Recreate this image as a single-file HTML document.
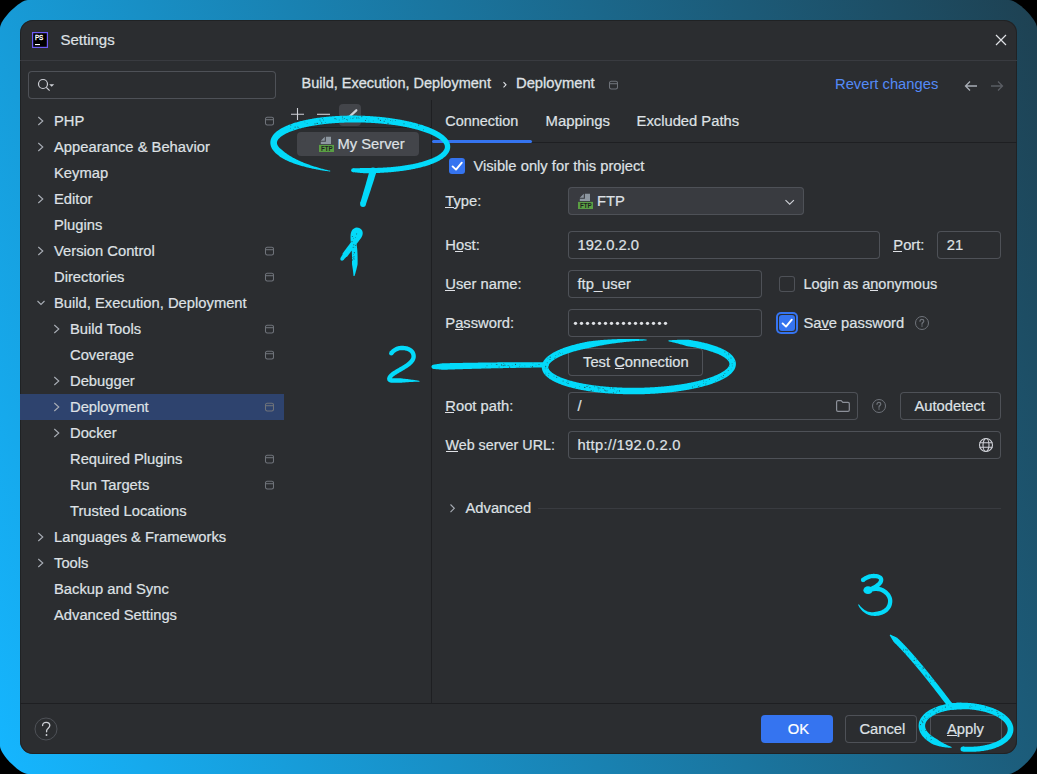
<!DOCTYPE html>
<html><head><meta charset="utf-8"><style>
html,body{margin:0;padding:0;}
body{width:1037px;height:774px;position:relative;overflow:hidden;background:#000;font-family:"Liberation Sans",sans-serif;}
.bg{position:absolute;left:0;top:0;width:1037px;height:774px;clip-path:path('M28 0H1009C1017.4 0 1037 19.6 1037 28V746C1037 754.4 1017.4 774 1009 774H28C19.6 774 0 754.4 0 746V28C0 19.6 19.6 0 28 0Z');background:linear-gradient(68deg,#15b6ff 0%,#1e4152 100%);}
.t{position:absolute;white-space:nowrap;-webkit-text-stroke:0.2px currentColor;}
.r{position:absolute;box-sizing:border-box;}
</style></head><body>
<div class="bg"></div>
<div class="r" style="left:20px;top:20px;width:997px;height:734px;background:#2b2d30;border-radius:13px;box-shadow:inset 0 0 0 1px rgba(30,31,34,0.8);"></div>
<svg class="r" style="left:32px;top:32px" width="16" height="16" viewBox="0 0 16 16"><rect x="0.6" y="0.6" width="14.8" height="14.8" fill="#000" stroke="#6e5cf6" stroke-width="1.2"/><text x="2.9" y="8.3" font-family="Liberation Sans" font-size="7.2" fill="#fff" stroke="#fff" stroke-width="0.35" textLength="8.3" lengthAdjust="spacingAndGlyphs">PS</text><rect x="3" y="12" width="5" height="1.1" fill="#fff"/></svg>
<div class="t" style="left:60.5px;top:31px;font-size:15px;line-height:18px;color:#dfe1e5;">Settings</div>
<svg class="r" style="left:994px;top:33px" width="14" height="14" viewBox="0 0 14 14"><path d="M2 2L12 12M12 2L2 12" stroke="#dfe1e5" stroke-width="1.2"/></svg>
<div class="r" style="left:20px;top:60px;width:997px;height:1px;background:#393b40;border-radius:0px;"></div>
<div class="r" style="left:28px;top:71px;width:248px;height:28px;background:none;border-radius:4px;box-shadow:inset 0 0 0 1px #4e5157;"></div>
<svg class="r" style="left:36px;top:76px" width="22" height="18" viewBox="0 0 22 18"><circle cx="7" cy="8" r="4.5" fill="none" stroke="#ced0d6" stroke-width="1.2"/><path d="M10.3 11.3L13.6 14.6" stroke="#ced0d6" stroke-width="1.2"/><path d="M13.2 8.2h5l-2.5 2.5z" fill="#ced0d6"/></svg>
<div class="r" style="left:20px;top:394px;width:264px;height:26px;background:#2e436e;border-radius:0px;"></div>
<div class="t" style="left:54px;top:112px;font-size:14.75px;line-height:18px;color:#dfe1e5;">PHP</div>
<svg class="r" style="left:36px;top:113px" width="12" height="16" viewBox="0 0 12 16"><path d="M2.3 4L6.8 8L2.3 12" fill="none" stroke="#a8adb5" stroke-width="1.1"/></svg>
<svg class="r" style="left:264px;top:116px" width="10" height="10" viewBox="0 0 10 10"><rect x="1.5" y="1.3" width="8" height="7.6" rx="1.6" fill="none" stroke="#6f737a" stroke-width="1.05"/><path d="M1.5 3.7h8" stroke="#6f737a" stroke-width="1.05"/></svg>
<div class="t" style="left:54px;top:138px;font-size:14.75px;line-height:18px;color:#dfe1e5;">Appearance &amp; Behavior</div>
<svg class="r" style="left:36px;top:139px" width="12" height="16" viewBox="0 0 12 16"><path d="M2.3 4L6.8 8L2.3 12" fill="none" stroke="#a8adb5" stroke-width="1.1"/></svg>
<div class="t" style="left:54px;top:164px;font-size:14.75px;line-height:18px;color:#dfe1e5;">Keymap</div>
<div class="t" style="left:54px;top:190px;font-size:14.75px;line-height:18px;color:#dfe1e5;">Editor</div>
<svg class="r" style="left:36px;top:191px" width="12" height="16" viewBox="0 0 12 16"><path d="M2.3 4L6.8 8L2.3 12" fill="none" stroke="#a8adb5" stroke-width="1.1"/></svg>
<div class="t" style="left:54px;top:216px;font-size:14.75px;line-height:18px;color:#dfe1e5;">Plugins</div>
<div class="t" style="left:54px;top:242px;font-size:14.75px;line-height:18px;color:#dfe1e5;">Version Control</div>
<svg class="r" style="left:36px;top:243px" width="12" height="16" viewBox="0 0 12 16"><path d="M2.3 4L6.8 8L2.3 12" fill="none" stroke="#a8adb5" stroke-width="1.1"/></svg>
<svg class="r" style="left:264px;top:246px" width="10" height="10" viewBox="0 0 10 10"><rect x="1.5" y="1.3" width="8" height="7.6" rx="1.6" fill="none" stroke="#6f737a" stroke-width="1.05"/><path d="M1.5 3.7h8" stroke="#6f737a" stroke-width="1.05"/></svg>
<div class="t" style="left:54px;top:268px;font-size:14.75px;line-height:18px;color:#dfe1e5;">Directories</div>
<svg class="r" style="left:264px;top:272px" width="10" height="10" viewBox="0 0 10 10"><rect x="1.5" y="1.3" width="8" height="7.6" rx="1.6" fill="none" stroke="#6f737a" stroke-width="1.05"/><path d="M1.5 3.7h8" stroke="#6f737a" stroke-width="1.05"/></svg>
<div class="t" style="left:54px;top:294px;font-size:14.75px;line-height:18px;color:#dfe1e5;">Build, Execution, Deployment</div>
<svg class="r" style="left:36px;top:295px" width="12" height="16" viewBox="0 0 12 16"><path d="M1.5 6L5 9.5L8.5 6" fill="none" stroke="#a8adb5" stroke-width="1.1"/></svg>
<div class="t" style="left:70px;top:320px;font-size:14.75px;line-height:18px;color:#dfe1e5;">Build Tools</div>
<svg class="r" style="left:52px;top:321px" width="12" height="16" viewBox="0 0 12 16"><path d="M2.3 4L6.8 8L2.3 12" fill="none" stroke="#a8adb5" stroke-width="1.1"/></svg>
<svg class="r" style="left:264px;top:324px" width="10" height="10" viewBox="0 0 10 10"><rect x="1.5" y="1.3" width="8" height="7.6" rx="1.6" fill="none" stroke="#6f737a" stroke-width="1.05"/><path d="M1.5 3.7h8" stroke="#6f737a" stroke-width="1.05"/></svg>
<div class="t" style="left:70px;top:346px;font-size:14.75px;line-height:18px;color:#dfe1e5;">Coverage</div>
<svg class="r" style="left:264px;top:350px" width="10" height="10" viewBox="0 0 10 10"><rect x="1.5" y="1.3" width="8" height="7.6" rx="1.6" fill="none" stroke="#6f737a" stroke-width="1.05"/><path d="M1.5 3.7h8" stroke="#6f737a" stroke-width="1.05"/></svg>
<div class="t" style="left:70px;top:372px;font-size:14.75px;line-height:18px;color:#dfe1e5;">Debugger</div>
<svg class="r" style="left:52px;top:373px" width="12" height="16" viewBox="0 0 12 16"><path d="M2.3 4L6.8 8L2.3 12" fill="none" stroke="#a8adb5" stroke-width="1.1"/></svg>
<div class="t" style="left:70px;top:398px;font-size:14.75px;line-height:18px;color:#dfe1e5;">Deployment</div>
<svg class="r" style="left:52px;top:399px" width="12" height="16" viewBox="0 0 12 16"><path d="M2.3 4L6.8 8L2.3 12" fill="none" stroke="#a8adb5" stroke-width="1.1"/></svg>
<svg class="r" style="left:264px;top:402px" width="10" height="10" viewBox="0 0 10 10"><rect x="1.5" y="1.3" width="8" height="7.6" rx="1.6" fill="none" stroke="#6f737a" stroke-width="1.05"/><path d="M1.5 3.7h8" stroke="#6f737a" stroke-width="1.05"/></svg>
<div class="t" style="left:70px;top:424px;font-size:14.75px;line-height:18px;color:#dfe1e5;">Docker</div>
<svg class="r" style="left:52px;top:425px" width="12" height="16" viewBox="0 0 12 16"><path d="M2.3 4L6.8 8L2.3 12" fill="none" stroke="#a8adb5" stroke-width="1.1"/></svg>
<div class="t" style="left:70px;top:450px;font-size:14.75px;line-height:18px;color:#dfe1e5;">Required Plugins</div>
<svg class="r" style="left:264px;top:454px" width="10" height="10" viewBox="0 0 10 10"><rect x="1.5" y="1.3" width="8" height="7.6" rx="1.6" fill="none" stroke="#6f737a" stroke-width="1.05"/><path d="M1.5 3.7h8" stroke="#6f737a" stroke-width="1.05"/></svg>
<div class="t" style="left:70px;top:476px;font-size:14.75px;line-height:18px;color:#dfe1e5;">Run Targets</div>
<svg class="r" style="left:264px;top:480px" width="10" height="10" viewBox="0 0 10 10"><rect x="1.5" y="1.3" width="8" height="7.6" rx="1.6" fill="none" stroke="#6f737a" stroke-width="1.05"/><path d="M1.5 3.7h8" stroke="#6f737a" stroke-width="1.05"/></svg>
<div class="t" style="left:70px;top:502px;font-size:14.75px;line-height:18px;color:#dfe1e5;">Trusted Locations</div>
<div class="t" style="left:54px;top:528px;font-size:14.75px;line-height:18px;color:#dfe1e5;">Languages &amp; Frameworks</div>
<svg class="r" style="left:36px;top:529px" width="12" height="16" viewBox="0 0 12 16"><path d="M2.3 4L6.8 8L2.3 12" fill="none" stroke="#a8adb5" stroke-width="1.1"/></svg>
<div class="t" style="left:54px;top:554px;font-size:14.75px;line-height:18px;color:#dfe1e5;">Tools</div>
<svg class="r" style="left:36px;top:555px" width="12" height="16" viewBox="0 0 12 16"><path d="M2.3 4L6.8 8L2.3 12" fill="none" stroke="#a8adb5" stroke-width="1.1"/></svg>
<div class="t" style="left:54px;top:580px;font-size:14.75px;line-height:18px;color:#dfe1e5;">Backup and Sync</div>
<div class="t" style="left:54px;top:606px;font-size:14.75px;line-height:18px;color:#dfe1e5;">Advanced Settings</div>
<div class="t" style="left:301.5px;top:75px;font-size:14.5px;line-height:17px;color:#dfe1e5;-webkit-text-stroke:0.3px #dfe1e5;">Build, Execution, Deployment</div>
<svg class="r" style="left:500px;top:79px" width="10" height="12" viewBox="0 0 10 12"><path d="M3.5 3.2L6 5.8L3.5 8.4" fill="none" stroke="#dfe1e5" stroke-width="1.1"/></svg>
<div class="t" style="left:516px;top:74px;font-size:14.75px;line-height:18px;color:#dfe1e5;-webkit-text-stroke:0.3px #dfe1e5;">Deployment</div>
<svg class="r" style="left:608px;top:80px" width="10" height="10" viewBox="0 0 10 10"><rect x="1.5" y="1.3" width="8" height="7.6" rx="1.6" fill="none" stroke="#6f737a" stroke-width="1.05"/><path d="M1.5 3.7h8" stroke="#6f737a" stroke-width="1.05"/></svg>
<div class="t" style="left:835px;top:75px;font-size:14.75px;line-height:18px;color:#548af7;-webkit-text-stroke:0;">Revert changes</div>
<svg class="r" style="left:963px;top:79px" width="16" height="14" viewBox="0 0 16 14"><path d="M2.5 7H14M7 2.5L2.5 7L7 11.5" fill="none" stroke="#a8adb5" stroke-width="1.3"/></svg>
<svg class="r" style="left:989px;top:79px" width="16" height="14" viewBox="0 0 16 14"><path d="M2 7H13.5M9 2.5L13.5 7L9 11.5" fill="none" stroke="#5a5d63" stroke-width="1.3"/></svg>
<svg class="r" style="left:289px;top:106px" width="16" height="16" viewBox="0 0 16 16"><path d="M8.5 2V14M2 8.3H15" stroke="#ced0d6" stroke-width="1.1"/></svg>
<svg class="r" style="left:315px;top:106px" width="16" height="16" viewBox="0 0 16 16"><path d="M2 8.3H15" stroke="#ced0d6" stroke-width="1.1"/></svg>
<div class="r" style="left:339px;top:104px;width:22px;height:22px;background:#43454a;border-radius:4px;"></div>
<svg class="r" style="left:342px;top:107px" width="16" height="16" viewBox="0 0 16 16"><path d="M5.5 11.5L14.3 3.3" stroke="#ced0d6" stroke-width="2.3" stroke-linecap="round"/></svg>
<div class="r" style="left:284px;top:127px;width:147px;height:1px;background:#1e1f22;border-radius:0px;"></div>
<div class="r" style="left:297px;top:132px;width:122px;height:24px;background:#43454a;border-radius:4px;"></div>
<svg class="r" style="left:319px;top:136px" width="16" height="17" viewBox="0 0 16 17"><path d="M1.8 4.8L5.8 0.8V4.8z M6.9 0.8H12V8H1.8V5.7H6.9z" fill="#8d97a0"/><rect x="0" y="8.9" width="15" height="7.1" fill="#5a9e44"/><text x="2" y="14.8" font-family="Liberation Sans" font-weight="bold" font-size="6.7" textLength="11.7" lengthAdjust="spacingAndGlyphs" fill="#1e1f22">FTP</text></svg>
<div class="t" style="left:337.5px;top:135px;font-size:14.75px;line-height:18px;color:#dfe1e5;">My Server</div>
<div class="r" style="left:431px;top:100px;width:1px;height:603px;background:#1e1f22;border-radius:0px;"></div>
<div class="t" style="left:445.3px;top:113px;font-size:14.45px;line-height:17px;color:#dfe1e5;">Connection</div>
<div class="t" style="left:545.5px;top:112px;font-size:14.9px;line-height:18px;color:#dfe1e5;">Mappings</div>
<div class="t" style="left:636.6px;top:112px;font-size:14.75px;line-height:18px;color:#dfe1e5;">Excluded Paths</div>
<div class="r" style="left:432px;top:142px;width:585px;height:1px;background:#1e1f22;border-radius:0px;"></div>
<div class="r" style="left:432px;top:140px;width:100px;height:3px;background:#3574f0;border-radius:1.5px;"></div>
<div class="r" style="left:449px;top:158px;width:16px;height:16px;background:#3574f0;border-radius:3px;"></div>
<svg class="r" style="left:449px;top:158px" width="16" height="16" viewBox="0 0 16 16"><path d="M3.6 8.4L7 11.6L12.8 4.7" fill="none" stroke="#fff" stroke-width="1.9" stroke-linecap="round" stroke-linejoin="round"/></svg>
<div class="t" style="left:473.4px;top:157px;font-size:14.75px;line-height:18px;color:#dfe1e5;">Visible only for this project</div>
<div class="t" style="left:445.3px;top:192px;font-size:14.75px;line-height:18px;color:#dfe1e5;">Type:</div>
<div class="r" style="left:445.3px;top:207px;width:9px;height:1px;background:#dfe1e5;border-radius:0px;"></div>
<div class="r" style="left:568px;top:187px;width:236px;height:28px;background:#393b40;border-radius:4px;box-shadow:inset 0 0 0 1px #4e5157;"></div>
<svg class="r" style="left:578px;top:193px" width="16" height="17" viewBox="0 0 16 17"><path d="M1.8 4.8L5.8 0.8V4.8z M6.9 0.8H12V8H1.8V5.7H6.9z" fill="#8d97a0"/><rect x="0" y="8.9" width="15" height="7.1" fill="#5a9e44"/><text x="2" y="14.8" font-family="Liberation Sans" font-weight="bold" font-size="6.7" textLength="11.7" lengthAdjust="spacingAndGlyphs" fill="#1e1f22">FTP</text></svg>
<div class="t" style="left:597px;top:192px;font-size:14.75px;line-height:18px;color:#dfe1e5;">FTP</div>
<svg class="r" style="left:783px;top:196px" width="12" height="12" viewBox="0 0 12 12"><path d="M2.5 4.2L6.7 8.2L10.9 4.2" fill="none" stroke="#ced0d6" stroke-width="1.15"/></svg>
<div class="t" style="left:445.3px;top:236px;font-size:14.75px;line-height:18px;color:#dfe1e5;">Host:</div>
<div class="r" style="left:455px;top:251px;width:8px;height:1px;background:#dfe1e5;border-radius:0px;"></div>
<div class="r" style="left:568px;top:231px;width:312px;height:28px;background:none;border-radius:4px;box-shadow:inset 0 0 0 1px #4e5157;"></div>
<div class="t" style="left:577.5px;top:236px;font-size:14.75px;line-height:18px;color:#dfe1e5;">192.0.2.0</div>
<div class="t" style="left:893.3px;top:236px;font-size:14.75px;line-height:18px;color:#dfe1e5;">Port:</div>
<div class="r" style="left:893.3px;top:251px;width:9px;height:1px;background:#dfe1e5;border-radius:0px;"></div>
<div class="r" style="left:937px;top:231px;width:64px;height:28px;background:none;border-radius:4px;box-shadow:inset 0 0 0 1px #4e5157;"></div>
<div class="t" style="left:946.8px;top:236px;font-size:14.75px;line-height:18px;color:#dfe1e5;">21</div>
<div class="t" style="left:445.3px;top:275px;font-size:14.75px;line-height:18px;color:#dfe1e5;">User name:</div>
<div class="r" style="left:445.3px;top:290px;width:10px;height:1px;background:#dfe1e5;border-radius:0px;"></div>
<div class="r" style="left:568px;top:270px;width:194px;height:28px;background:none;border-radius:4px;box-shadow:inset 0 0 0 1px #4e5157;"></div>
<div class="t" style="left:577.5px;top:275px;font-size:14.75px;line-height:18px;color:#dfe1e5;">ftp_user</div>
<div class="r" style="left:779px;top:276px;width:16px;height:16px;background:none;border-radius:3px;box-shadow:inset 0 0 0 1px #4e5157;"></div>
<div class="t" style="left:803.4px;top:276px;font-size:14.5px;line-height:17px;color:#dfe1e5;">Login as anonymous</div>
<div class="r" style="left:869.5px;top:290px;width:8.5px;height:1px;background:#dfe1e5;border-radius:0px;"></div>
<div class="t" style="left:445.3px;top:314px;font-size:14.75px;line-height:18px;color:#dfe1e5;">Password:</div>
<div class="r" style="left:455px;top:329px;width:8px;height:1px;background:#dfe1e5;border-radius:0px;"></div>
<div class="r" style="left:568px;top:309px;width:194px;height:28px;background:none;border-radius:4px;box-shadow:inset 0 0 0 1px #4e5157;"></div>
<svg class="r" style="left:570px;top:318px" width="100" height="10" viewBox="0 0 100 10"><circle cx="5.5" cy="5.3" r="1.65" fill="#dfe1e5"/><circle cx="11.5" cy="5.3" r="1.65" fill="#dfe1e5"/><circle cx="17.5" cy="5.3" r="1.65" fill="#dfe1e5"/><circle cx="23.5" cy="5.3" r="1.65" fill="#dfe1e5"/><circle cx="29.5" cy="5.3" r="1.65" fill="#dfe1e5"/><circle cx="35.5" cy="5.3" r="1.65" fill="#dfe1e5"/><circle cx="41.5" cy="5.3" r="1.65" fill="#dfe1e5"/><circle cx="47.5" cy="5.3" r="1.65" fill="#dfe1e5"/><circle cx="53.5" cy="5.3" r="1.65" fill="#dfe1e5"/><circle cx="59.5" cy="5.3" r="1.65" fill="#dfe1e5"/><circle cx="65.5" cy="5.3" r="1.65" fill="#dfe1e5"/><circle cx="71.5" cy="5.3" r="1.65" fill="#dfe1e5"/><circle cx="77.5" cy="5.3" r="1.65" fill="#dfe1e5"/><circle cx="83.5" cy="5.3" r="1.65" fill="#dfe1e5"/><circle cx="89.5" cy="5.3" r="1.65" fill="#dfe1e5"/><circle cx="95.5" cy="5.3" r="1.65" fill="#dfe1e5"/></svg>
<div class="r" style="left:776px;top:312px;width:22px;height:22px;background:none;border-radius:5px;box-shadow:inset 0 0 0 1px #3574f0;box-shadow:inset 0 0 0 2px #3574f0;"></div>
<div class="r" style="left:779px;top:315px;width:16px;height:16px;background:#3574f0;border-radius:3px;"></div>
<svg class="r" style="left:779px;top:315px" width="16" height="16" viewBox="0 0 16 16"><path d="M3.6 8.4L7 11.6L12.8 4.7" fill="none" stroke="#fff" stroke-width="1.9" stroke-linecap="round" stroke-linejoin="round"/></svg>
<div class="t" style="left:803.4px;top:314px;font-size:14.75px;line-height:18px;color:#dfe1e5;">Save password</div>
<div class="r" style="left:820px;top:329px;width:8.5px;height:1px;background:#dfe1e5;border-radius:0px;"></div>
<svg class="r" style="left:914px;top:315px" width="16" height="16" viewBox="0 0 16 16"><circle cx="8" cy="8" r="6.5" fill="none" stroke="#6f737a" stroke-width="1"/><path d="M6 6.3C6 5 6.9 4.4 7.9 4.4C9 4.4 9.8 5.1 9.8 6.1C9.8 7.3 8.2 7.6 8 8.8V9.3" fill="none" stroke="#6f737a" stroke-width="1.2" stroke-linecap="round"/><circle cx="8" cy="10.9" r="0.75" fill="#6f737a"/></svg>
<div class="r" style="left:568px;top:348px;width:135px;height:28px;background:none;border-radius:4px;box-shadow:inset 0 0 0 1px #4e5157;"></div>
<div class="t" style="left:583px;top:353px;font-size:14.75px;line-height:18px;color:#dfe1e5;">Test Connection</div>
<div class="r" style="left:615px;top:368px;width:9px;height:1px;background:#dfe1e5;border-radius:0px;"></div>
<div class="t" style="left:445.3px;top:397px;font-size:14.75px;line-height:18px;color:#dfe1e5;">Root path:</div>
<div class="r" style="left:445.3px;top:412px;width:9px;height:1px;background:#dfe1e5;border-radius:0px;"></div>
<div class="r" style="left:568px;top:392px;width:290px;height:28px;background:none;border-radius:4px;box-shadow:inset 0 0 0 1px #4e5157;"></div>
<div class="t" style="left:577.6px;top:397px;font-size:14.75px;line-height:18px;color:#dfe1e5;">/</div>
<svg class="r" style="left:835px;top:398px" width="16" height="16" viewBox="0 0 16 16"><path d="M1.6 4Q1.6 2.6 3 2.6H6.2L7.8 4.3H13Q14.3 4.3 14.3 5.6V12Q14.3 13.4 13 13.4H3Q1.6 13.4 1.6 12Z" fill="none" stroke="#8c9099" stroke-width="1.2" stroke-linejoin="round"/></svg>
<svg class="r" style="left:871px;top:398px" width="16" height="16" viewBox="0 0 16 16"><circle cx="8" cy="8" r="6.5" fill="none" stroke="#6f737a" stroke-width="1"/><path d="M6 6.3C6 5 6.9 4.4 7.9 4.4C9 4.4 9.8 5.1 9.8 6.1C9.8 7.3 8.2 7.6 8 8.8V9.3" fill="none" stroke="#6f737a" stroke-width="1.2" stroke-linecap="round"/><circle cx="8" cy="10.9" r="0.75" fill="#6f737a"/></svg>
<div class="r" style="left:900px;top:392px;width:101px;height:28px;background:none;border-radius:4px;box-shadow:inset 0 0 0 1px #4e5157;"></div>
<div class="t" style="left:914.4px;top:397px;font-size:14.75px;line-height:18px;color:#dfe1e5;">Autodetect</div>
<div class="t" style="left:445.5px;top:437px;font-size:14.3px;line-height:17px;color:#dfe1e5;">Web server URL:</div>
<div class="r" style="left:445.5px;top:451px;width:12px;height:1px;background:#dfe1e5;border-radius:0px;"></div>
<div class="r" style="left:568px;top:431px;width:433px;height:28px;background:none;border-radius:4px;box-shadow:inset 0 0 0 1px #4e5157;"></div>
<div class="t" style="left:577.6px;top:436px;font-size:14.75px;line-height:18px;color:#dfe1e5;letter-spacing:0.3px;">http://192.0.2.0</div>
<svg class="r" style="left:978px;top:437px" width="16" height="16" viewBox="0 0 16 16"><circle cx="8" cy="8" r="6.5" fill="none" stroke="#ced0d6" stroke-width="1.1"/><ellipse cx="8" cy="8" rx="3" ry="6.5" fill="none" stroke="#ced0d6" stroke-width="1.1"/><path d="M1.5 5.8H14.5M1.5 10.2H14.5" stroke="#ced0d6" stroke-width="1.1"/></svg>
<svg class="r" style="left:446px;top:500px" width="12" height="16" viewBox="0 0 12 16"><path d="M4.5 4.5L8.3 8.3L4.5 12.1" fill="none" stroke="#a8adb5" stroke-width="1.1"/></svg>
<div class="t" style="left:465.5px;top:499px;font-size:14.75px;line-height:18px;color:#dfe1e5;">Advanced</div>
<div class="r" style="left:538px;top:508px;width:463px;height:1px;background:#393b40;border-radius:0px;"></div>
<div class="r" style="left:20px;top:703px;width:997px;height:1px;background:#1e1f22;border-radius:0px;"></div>
<svg class="r" style="left:34px;top:717px" width="24" height="24" viewBox="0 0 24 24"><circle cx="12" cy="12" r="11" fill="none" stroke="#4e5157" stroke-width="1"/><path d="M8.6 8.6C8.6 6.4 10.1 5.3 12.2 5.3C14.3 5.3 15.8 6.6 15.8 8.5C15.8 10.9 12.9 11.3 12.6 13.6V14.8" fill="none" stroke="#ced0d6" stroke-width="1.3" stroke-linecap="round"/><circle cx="12.5" cy="18" r="0.95" fill="#ced0d6"/></svg>
<div class="r" style="left:761px;top:715px;width:72px;height:28px;background:#3574f0;border-radius:4px;"></div>
<div class="t" style="left:787.8px;top:720px;font-size:14.75px;line-height:18px;color:#ffffff;">OK</div>
<div class="r" style="left:845px;top:715px;width:72px;height:28px;background:none;border-radius:4px;box-shadow:inset 0 0 0 1px #4e5157;"></div>
<div class="t" style="left:859.4px;top:720px;font-size:14.75px;line-height:18px;color:#dfe1e5;">Cancel</div>
<div class="r" style="left:930px;top:715px;width:72px;height:28px;background:none;border-radius:4px;box-shadow:inset 0 0 0 1px #4e5157;"></div>
<div class="t" style="left:947px;top:720px;font-size:14.75px;line-height:18px;color:#dfe1e5;">Apply</div>
<div class="r" style="left:947px;top:735px;width:10px;height:1px;background:#dfe1e5;border-radius:0px;"></div>
<svg class="r" style="left:0;top:0" width="1037" height="774" viewBox="0 0 1037 774"><g fill="#03dafa"><path d="M330.29 170.77 L329.51 170.59 L328.73 170.40 L327.95 170.22 L327.18 170.04 L326.40 169.84 L325.62 169.65 L324.85 169.46 L324.08 169.26 L323.30 169.05 L322.53 168.85 L321.76 168.64 L320.99 168.43 L320.22 168.22 L319.45 168.00 L318.69 167.78 L317.92 167.55 L317.15 167.33 L316.39 167.10 L315.63 166.86 L314.86 166.63 L314.11 166.39 L313.35 166.14 L312.59 165.89 L311.84 165.65 L311.09 165.39 L310.33 165.13 L309.58 164.87 L308.84 164.60 L308.08 164.33 L307.34 164.06 L306.60 163.78 L305.85 163.50 L305.12 163.22 L304.38 162.92 L303.64 162.63 L302.91 162.33 L302.19 162.03 L301.45 161.71 L300.73 161.41 L300.02 161.09 L299.29 160.76 L298.58 160.44 L297.87 160.10 L297.15 159.76 L296.45 159.42 L295.75 159.07 L295.05 158.72 L294.37 158.36 L293.67 157.99 L292.99 157.63 L292.32 157.24 L291.63 156.86 L290.97 156.47 L290.30 156.07 L289.65 155.67 L289.01 155.25 L288.36 154.84 L287.74 154.41 L287.11 153.98 L286.50 153.54 L285.89 153.09 L285.29 152.63 L284.70 152.18 L284.11 151.74 L283.52 151.30 L282.95 150.84 L282.37 150.36 L281.77 149.85 L281.18 149.35 L280.62 148.86 L280.10 148.39 L279.63 147.92 L279.16 147.42 L278.74 146.94 L278.37 146.45 L278.02 145.94 L277.71 145.42 L277.46 144.93 L277.26 144.46 L277.11 143.98 L277.01 143.50 L276.96 143.03 L276.96 142.58 L277.00 142.12 L277.09 141.66 L277.23 141.20 L277.41 140.75 L277.66 140.29 L277.96 139.80 L278.31 139.31 L278.68 138.84 L279.09 138.39 L279.56 137.92 L280.04 137.47 L280.55 137.05 L281.10 136.61 L281.65 136.19 L282.23 135.80 L282.82 135.40 L283.43 135.02 L284.06 134.65 L284.70 134.29 L285.35 133.94 L286.00 133.60 L286.67 133.27 L287.35 132.95 L288.03 132.64 L288.72 132.33 L289.41 132.03 L290.12 131.75 L290.82 131.47 L291.53 131.20 L292.26 130.93 L292.97 130.67 L293.71 130.42 L294.43 130.17 L295.15 129.94 L295.90 129.70 L296.63 129.47 L297.38 129.25 L298.12 129.03 L298.85 128.82 L299.62 128.61 L300.36 128.41 L301.10 128.22 L301.87 128.02 L302.62 127.83 L303.38 127.65 L304.14 127.47 L304.90 127.30 L305.66 127.13 L306.43 126.96 L307.19 126.80 L307.96 126.64 L308.73 126.49 L309.49 126.34 L310.26 126.19 L311.04 126.04 L311.80 125.91 L312.58 125.77 L313.36 125.64 L314.13 125.50 L314.90 125.38 L315.69 125.26 L316.46 125.13 L317.23 125.02 L318.02 124.91 L318.79 124.79 L319.57 124.69 L320.35 124.58 L321.14 124.48 L321.91 124.38 L322.69 124.29 L323.49 124.19 L324.26 124.10 L325.04 124.01 L325.83 123.93 L326.62 123.84 L327.39 123.76 L328.18 123.69 L328.98 123.61 L329.75 123.53 L330.53 123.47 L331.33 123.40 L332.12 123.33 L332.90 123.27 L333.69 123.21 L334.48 123.15 L335.27 123.09 L336.05 123.04 L336.84 122.99 L337.64 122.94 L338.42 122.89 L339.20 122.85 L340.00 122.81 L340.79 122.77 L341.57 122.73 L342.37 122.70 L343.17 122.66 L343.95 122.63 L344.73 122.60 L345.53 122.58 L346.33 122.55 L347.11 122.53 L347.90 122.51 L348.70 122.49 L349.49 122.48 L350.27 122.46 L351.06 122.45 L351.86 122.44 L352.65 122.44 L353.44 122.43 L354.23 122.43 L355.03 122.43 L355.82 122.43 L356.60 122.43 L357.40 122.44 L358.20 122.45 L358.98 122.45 L359.77 122.47 L360.57 122.48 L361.36 122.50 L362.15 122.51 L362.94 122.53 L363.74 122.56 L364.53 122.58 L365.31 122.61 L366.11 122.64 L366.91 122.67 L367.69 122.70 L368.47 122.73 L369.27 122.77 L370.07 122.81 L370.85 122.85 L371.64 122.89 L372.44 122.94 L373.23 122.98 L374.01 123.03 L374.80 123.09 L375.60 123.14 L376.38 123.19 L377.17 123.25 L377.96 123.32 L378.76 123.38 L379.54 123.44 L380.32 123.51 L381.12 123.58 L381.91 123.65 L382.69 123.72 L383.48 123.80 L384.27 123.88 L385.06 123.96 L385.83 124.04 L386.63 124.13 L387.42 124.22 L388.20 124.31 L388.98 124.40 L389.77 124.50 L390.56 124.59 L391.33 124.69 L392.12 124.80 L392.91 124.90 L393.69 125.01 L394.47 125.12 L395.26 125.23 L396.04 125.35 L396.81 125.46 L397.60 125.59 L398.38 125.71 L399.15 125.83 L399.93 125.97 L400.72 126.10 L401.49 126.23 L402.26 126.37 L403.05 126.51 L403.82 126.65 L404.59 126.80 L405.37 126.95 L406.15 127.11 L406.91 127.26 L407.68 127.42 L408.46 127.59 L409.23 127.75 L409.99 127.92 L410.77 128.10 L411.53 128.27 L412.29 128.45 L413.06 128.64 L413.82 128.82 L414.58 129.01 L415.35 129.21 L416.10 129.41 L416.85 129.61 L417.62 129.82 L418.37 130.03 L419.12 130.25 L419.88 130.47 L420.62 130.69 L421.36 130.92 L422.12 131.16 L422.86 131.40 L423.60 131.65 L424.34 131.89 L425.07 132.15 L425.81 132.42 L426.53 132.68 L427.25 132.95 L427.98 133.23 L428.70 133.52 L429.42 133.81 L430.13 134.10 L430.83 134.41 L431.54 134.73 L432.23 135.05 L432.93 135.38 L433.61 135.71 L434.29 136.06 L434.96 136.41 L435.62 136.78 L436.28 137.14 L436.92 137.53 L437.56 137.92 L438.18 138.32 L438.80 138.74 L439.39 139.16 L439.98 139.60 L440.54 140.04 L441.08 140.51 L441.61 140.98 L442.09 141.46 L442.57 141.96 L443.01 142.47 L443.40 142.98 L443.76 143.50 L444.08 144.04 L444.35 144.58 L444.57 145.11 L444.73 145.62 L444.83 146.15 L444.89 146.67 L444.88 147.20 L444.83 147.72 L444.71 148.25 L444.54 148.78 L444.33 149.31 L444.06 149.82 L443.73 150.34 L443.35 150.86 L442.94 151.38 L442.50 151.86 L442.02 152.35 L441.50 152.83 L440.97 153.28 L440.40 153.73 L439.83 154.16 L439.24 154.57 L438.62 154.99 L437.99 155.38 L437.35 155.76 L436.70 156.13 L436.04 156.49 L435.37 156.85 L434.69 157.18 L434.00 157.52 L433.31 157.84 L432.61 158.15 L431.91 158.45 L431.19 158.75 L430.48 159.04 L429.77 159.31 L429.03 159.59 L428.31 159.85 L427.57 160.11 L426.84 160.37 L426.11 160.61 L425.36 160.85 L424.62 161.08 L423.86 161.31 L423.12 161.54 L422.37 161.75 L421.61 161.96 L420.86 162.17 L420.10 162.37 L419.33 162.57 L418.58 162.76 L417.82 162.94 L417.05 163.13 L416.29 163.30 L415.52 163.47 L414.74 163.65 L413.98 163.81 L413.21 163.97 L412.43 164.13 L411.66 164.28 L410.89 164.43 L410.11 164.57 L409.34 164.71 L408.56 164.85 L407.77 164.99 L407.00 165.12 L406.22 165.24 L405.43 165.37 L404.66 165.49 L403.88 165.60 L403.09 165.72 L402.31 165.83 L401.53 165.94 L400.74 166.04 L399.95 166.14 L399.17 166.24 L398.39 166.33 L397.59 166.43 L396.81 166.52 L396.03 166.60 L395.24 166.69 L394.45 166.77 L393.66 166.85 L392.87 166.92 L392.08 166.99 L391.29 167.07 L390.51 167.13 L389.71 167.19 L388.92 167.26 L388.13 167.32 L387.34 167.37 L386.54 167.43 L385.76 167.48 L384.97 167.53 L384.17 167.57 L383.38 167.62 L382.59 167.66 L381.80 167.70 L381.00 167.73 L380.21 167.77 L379.42 167.80 L378.63 167.83 L377.83 167.86 L377.04 167.88 L376.25 167.90 L375.45 167.92 L374.66 167.94 L373.87 167.96 L373.08 167.97 L372.28 167.98 L371.48 167.99 L370.70 167.99 L369.90 168.00 L369.10 168.00 L368.31 168.00 L367.52 168.00 L366.72 167.99 L365.92 167.98 L365.14 167.98 L364.35 167.96 L363.55 167.97 L362.75 168.01 L361.96 168.05 L361.17 168.08 L360.37 168.11 L359.57 168.15 L358.78 168.17 L357.98 168.20 L357.18 168.22 L356.39 168.25 L355.60 168.26 L354.80 168.28 L353.99 168.29 L353.19 168.31 L353.02 172.16 L353.82 172.24 L354.62 172.33 L355.42 172.42 L356.23 172.50 L357.03 172.58 L357.83 172.66 L358.64 172.74 L359.45 172.81 L360.25 172.88 L361.05 172.95 L361.86 173.02 L362.67 173.09 L363.48 173.15 L364.28 173.18 L365.09 173.19 L365.91 173.19 L366.71 173.18 L367.51 173.18 L368.33 173.18 L369.14 173.17 L369.94 173.16 L370.74 173.15 L371.56 173.14 L372.37 173.12 L373.17 173.10 L373.98 173.09 L374.79 173.06 L375.60 173.04 L376.40 173.01 L377.21 172.99 L378.02 172.95 L378.82 172.92 L379.63 172.88 L380.44 172.85 L381.25 172.80 L382.05 172.76 L382.86 172.72 L383.68 172.67 L384.48 172.62 L385.28 172.57 L386.09 172.52 L386.90 172.46 L387.70 172.40 L388.51 172.34 L389.32 172.27 L390.13 172.21 L390.92 172.14 L391.74 172.07 L392.55 171.99 L393.34 171.92 L394.15 171.84 L394.96 171.76 L395.76 171.67 L396.56 171.58 L397.37 171.50 L398.18 171.40 L398.98 171.30 L399.78 171.21 L400.59 171.10 L401.39 171.00 L402.19 170.89 L403.00 170.78 L403.81 170.67 L404.60 170.55 L405.41 170.43 L406.22 170.31 L407.01 170.18 L407.81 170.05 L408.62 169.92 L409.41 169.78 L410.21 169.64 L411.02 169.49 L411.81 169.35 L412.61 169.20 L413.41 169.04 L414.21 168.88 L415.00 168.72 L415.81 168.55 L416.60 168.37 L417.39 168.20 L418.19 168.02 L418.98 167.83 L419.78 167.64 L420.57 167.45 L421.36 167.25 L422.15 167.04 L422.95 166.83 L423.73 166.61 L424.52 166.39 L425.31 166.16 L426.09 165.93 L426.88 165.68 L427.66 165.44 L428.45 165.19 L429.23 164.92 L430.01 164.65 L430.79 164.37 L431.56 164.09 L432.34 163.80 L433.11 163.49 L433.88 163.18 L434.65 162.85 L435.42 162.52 L436.18 162.17 L436.94 161.81 L437.70 161.44 L438.45 161.06 L439.20 160.66 L439.94 160.24 L440.68 159.81 L441.42 159.36 L442.14 158.89 L442.86 158.39 L443.57 157.87 L444.27 157.33 L444.96 156.75 L445.62 156.15 L446.28 155.51 L446.92 154.81 L447.52 154.08 L448.08 153.32 L448.62 152.49 L449.11 151.59 L449.51 150.64 L449.84 149.65 L450.07 148.61 L450.20 147.55 L450.23 146.48 L450.14 145.41 L449.94 144.36 L449.65 143.34 L449.26 142.38 L448.83 141.48 L448.35 140.64 L447.81 139.83 L447.23 139.06 L446.64 138.36 L446.02 137.68 L445.38 137.03 L444.72 136.43 L444.06 135.84 L443.37 135.28 L442.68 134.74 L441.98 134.23 L441.27 133.74 L440.56 133.26 L439.84 132.80 L439.11 132.35 L438.38 131.92 L437.64 131.50 L436.90 131.10 L436.16 130.71 L435.41 130.33 L434.67 129.96 L433.91 129.59 L433.16 129.25 L432.40 128.90 L431.63 128.57 L430.88 128.24 L430.11 127.92 L429.35 127.62 L428.58 127.31 L427.80 127.02 L427.04 126.73 L426.26 126.44 L425.49 126.17 L424.71 125.89 L423.93 125.63 L423.16 125.37 L422.38 125.11 L421.59 124.87 L420.82 124.63 L420.03 124.38 L419.24 124.15 L418.47 123.92 L417.67 123.69 L416.88 123.47 L416.11 123.26 L415.31 123.04 L414.52 122.83 L413.74 122.63 L412.94 122.43 L412.14 122.23 L411.37 122.04 L410.57 121.85 L409.77 121.67 L408.98 121.49 L408.19 121.31 L407.38 121.13 L406.60 120.96 L405.80 120.79 L405.00 120.63 L404.20 120.47 L403.42 120.31 L402.61 120.15 L401.81 120.00 L401.02 119.85 L400.22 119.70 L399.41 119.56 L398.61 119.42 L397.82 119.29 L397.01 119.15 L396.21 119.02 L395.42 118.89 L394.61 118.76 L393.80 118.64 L393.01 118.52 L392.21 118.40 L391.40 118.29 L390.59 118.17 L389.80 118.07 L388.99 117.96 L388.18 117.85 L387.38 117.75 L386.58 117.65 L385.77 117.55 L384.96 117.46 L384.16 117.37 L383.36 117.27 L382.55 117.19 L381.74 117.10 L380.94 117.02 L380.13 116.94 L379.32 116.86 L378.52 116.79 L377.72 116.71 L376.90 116.64 L376.09 116.57 L375.29 116.51 L374.48 116.44 L373.67 116.38 L372.86 116.32 L372.06 116.27 L371.25 116.21 L370.43 116.16 L369.63 116.11 L368.83 116.06 L368.01 116.01 L367.20 115.97 L366.40 115.93 L365.59 115.89 L364.77 115.86 L363.96 115.83 L363.16 115.79 L362.35 115.76 L361.53 115.74 L360.73 115.71 L359.92 115.69 L359.11 115.67 L358.29 115.65 L357.49 115.64 L356.69 115.62 L355.87 115.61 L355.05 115.60 L354.25 115.60 L353.44 115.59 L352.63 115.59 L351.81 115.59 L351.01 115.59 L350.20 115.59 L349.38 115.60 L348.57 115.61 L347.77 115.62 L346.96 115.64 L346.14 115.66 L345.33 115.68 L344.53 115.70 L343.71 115.72 L342.89 115.75 L342.09 115.78 L341.29 115.80 L340.47 115.84 L339.66 115.88 L338.86 115.91 L338.04 115.95 L337.22 116.00 L336.42 116.05 L335.62 116.09 L334.80 116.14 L333.98 116.20 L333.18 116.26 L332.37 116.31 L331.55 116.38 L330.75 116.44 L329.95 116.51 L329.13 116.57 L328.31 116.65 L327.52 116.73 L326.71 116.80 L325.89 116.89 L325.08 116.97 L324.29 117.06 L323.47 117.14 L322.65 117.24 L321.86 117.34 L321.05 117.43 L320.23 117.54 L319.43 117.64 L318.63 117.75 L317.81 117.86 L317.01 117.98 L316.21 118.10 L315.40 118.22 L314.58 118.35 L313.79 118.47 L312.98 118.60 L312.17 118.74 L311.38 118.88 L310.57 119.02 L309.76 119.18 L308.96 119.33 L308.16 119.48 L307.35 119.64 L306.55 119.81 L305.75 119.97 L304.94 120.15 L304.15 120.33 L303.35 120.51 L302.54 120.70 L301.75 120.89 L300.95 121.08 L300.15 121.29 L299.36 121.49 L298.56 121.70 L297.76 121.93 L296.98 122.15 L296.17 122.38 L295.38 122.62 L294.59 122.86 L293.80 123.11 L293.02 123.37 L292.22 123.63 L291.43 123.91 L290.65 124.19 L289.86 124.48 L289.09 124.77 L288.30 125.08 L287.52 125.40 L286.74 125.72 L285.97 126.06 L285.20 126.41 L284.42 126.77 L283.66 127.14 L282.89 127.53 L282.13 127.93 L281.38 128.35 L280.62 128.79 L279.88 129.24 L279.13 129.72 L278.40 130.21 L277.66 130.73 L276.94 131.29 L276.24 131.85 L275.53 132.47 L274.85 133.12 L274.20 133.79 L273.54 134.53 L272.92 135.33 L272.35 136.15 L271.83 137.04 L271.34 138.00 L270.93 139.03 L270.63 140.11 L270.42 141.23 L270.33 142.36 L270.36 143.50 L270.50 144.62 L270.75 145.71 L271.09 146.75 L271.52 147.75 L272.01 148.68 L272.54 149.53 L273.10 150.32 L273.72 151.11 L274.36 151.83 L274.99 152.48 L275.67 153.14 L276.35 153.73 L276.99 154.29 L277.64 154.82 L278.27 155.33 L278.93 155.86 L279.62 156.39 L280.31 156.91 L281.02 157.41 L281.74 157.86 L282.49 158.30 L283.22 158.71 L283.97 159.12 L284.72 159.50 L285.47 159.89 L286.23 160.25 L286.98 160.62 L287.75 160.96 L288.50 161.30 L289.27 161.63 L290.03 161.95 L290.80 162.26 L291.57 162.57 L292.33 162.86 L293.11 163.16 L293.88 163.43 L294.65 163.71 L295.43 163.98 L296.20 164.24 L296.98 164.50 L297.77 164.75 L298.54 165.00 L299.32 165.24 L300.11 165.48 L300.88 165.70 L301.67 165.93 L302.45 166.15 L303.23 166.36 L304.02 166.58 L304.81 166.78 L305.59 166.99 L306.38 167.19 L307.17 167.38 L307.95 167.57 L308.74 167.76 L309.53 167.94 L310.31 168.11 L311.10 168.29 L311.90 168.46 L312.68 168.63 L313.47 168.80 L314.27 168.96 L315.06 169.11 L315.85 169.27 L316.64 169.42 L317.44 169.57 L318.23 169.71 L319.02 169.86 L319.82 170.00 L320.61 170.13 L321.40 170.27 L322.20 170.40 L322.99 170.52 L323.79 170.65 L324.58 170.77 L325.38 170.89 L326.17 171.01 L326.97 171.12 L327.76 171.23 L328.56 171.34 L329.36 171.45 L330.15 171.56Z"/><circle cx="353.11" cy="170.23" r="1.93"/><path d="M369.62 170.07 L369.43 170.85 L369.23 171.61 L369.03 172.38 L368.83 173.15 L368.62 173.92 L368.42 174.68 L368.21 175.45 L368.00 176.22 L367.79 176.99 L367.57 177.75 L367.36 178.52 L367.15 179.29 L366.93 180.06 L366.71 180.82 L366.49 181.59 L366.27 182.36 L366.05 183.13 L365.83 183.89 L365.61 184.66 L365.39 185.43 L365.16 186.20 L364.94 186.97 L364.71 187.73 L364.49 188.50 L364.26 189.27 L364.04 190.04 L363.81 190.81 L363.59 191.58 L363.36 192.35 L363.13 193.12 L362.91 193.89 L362.68 194.66 L362.45 195.43 L362.23 196.20 L362.00 196.97 L361.78 197.74 L361.55 198.52 L361.33 199.29 L361.11 200.06 L360.88 200.84 L360.66 201.61 L360.44 202.39 L360.22 203.16 L365.78 204.84 L366.02 204.07 L366.27 203.32 L366.51 202.56 L366.76 201.80 L367.01 201.04 L367.25 200.28 L367.50 199.52 L367.75 198.76 L368.01 198.00 L368.26 197.24 L368.51 196.48 L368.76 195.72 L369.01 194.96 L369.27 194.20 L369.52 193.44 L369.77 192.68 L370.03 191.91 L370.28 191.15 L370.53 190.39 L370.78 189.63 L371.04 188.86 L371.29 188.10 L371.54 187.34 L371.79 186.57 L372.04 185.81 L372.29 185.04 L372.54 184.28 L372.79 183.51 L373.04 182.74 L373.28 181.97 L373.53 181.21 L373.77 180.44 L374.02 179.67 L374.26 178.90 L374.50 178.12 L374.74 177.35 L374.98 176.58 L375.22 175.81 L375.45 175.03 L375.69 174.26 L375.92 173.48 L376.15 172.70 L376.38 171.93Z"/><circle cx="373.00" cy="171.00" r="3.50"/><circle cx="363.00" cy="204.00" r="2.90"/><path d="M343.42 260.02 L343.97 259.42 L344.51 258.83 L345.06 258.24 L345.61 257.65 L346.16 257.06 L347.09 256.75 L347.57 256.11 L348.05 255.46 L348.53 254.82 L349.00 254.17 L349.48 253.53 L349.96 252.89 L350.45 252.24 L350.93 251.60 L351.41 250.96 L351.89 250.31 L352.37 249.67 L352.86 249.02 L353.34 248.38 L353.82 247.73 L354.31 247.09 L354.79 246.44 L355.27 245.80 L355.76 245.15 L356.24 244.50 L356.72 243.85 L357.21 243.21 L357.69 242.56 L358.17 241.90 L358.65 241.25 L359.13 240.60 L359.61 239.94 L360.08 239.29 L360.56 238.63 L361.07 237.92 L361.64 237.04 L362.14 235.99 L362.53 234.83 L362.72 233.51 L362.63 232.05 L362.12 230.54 L361.14 229.19 L359.80 228.21 L358.28 227.68 L356.76 227.60 L355.36 227.85 L354.04 228.41 L352.82 229.31 L351.90 230.47 L351.32 231.63 L350.97 232.73 L350.75 233.76 L350.62 234.73 L350.55 235.67 L350.51 236.58 L350.51 237.47 L350.53 238.34 L350.57 239.20 L350.62 240.05 L350.68 240.89 L350.75 241.71 L350.83 242.54 L350.92 243.36 L351.01 244.17 L351.10 244.98 L351.19 245.79 L351.28 246.59 L351.38 247.39 L351.47 248.19 L351.57 248.99 L351.66 249.76 L351.72 250.48 L351.77 251.23 L351.81 252.02 L351.85 252.81 L351.88 253.60 L351.91 254.39 L351.94 255.18 L351.96 255.97 L351.98 256.77 L352.00 257.56 L352.01 258.35 L352.02 259.14 L352.03 259.94 L352.03 260.73 L352.03 261.52 L352.02 262.31 L352.01 263.10 L352.00 263.90 L352.07 264.69 L352.20 265.48 L352.34 266.28 L352.46 267.08 L352.58 267.88 L352.70 268.68 L352.82 269.48 L352.92 270.28 L353.03 271.08 L353.12 271.89 L353.21 272.70 L353.30 273.50 L353.37 274.31 L353.44 275.13 L353.50 275.94 L354.50 276.06 L354.75 275.28 L355.00 274.49 L355.23 273.69 L355.47 272.90 L355.69 272.10 L355.91 271.30 L356.13 270.49 L356.34 269.69 L356.54 268.88 L356.74 268.07 L356.93 267.26 L357.12 266.45 L357.31 265.64 L357.49 264.82 L357.60 264.01 L357.61 263.19 L357.62 262.37 L357.63 261.55 L357.63 260.73 L357.63 259.91 L357.62 259.09 L357.61 258.28 L357.60 257.46 L357.58 256.64 L357.56 255.82 L357.54 255.00 L357.51 254.19 L357.48 253.37 L357.44 252.55 L357.40 251.73 L357.36 250.91 L357.31 250.05 L357.22 249.17 L357.13 248.34 L357.04 247.54 L356.94 246.74 L356.85 245.94 L356.75 245.14 L356.66 244.35 L356.57 243.56 L356.49 242.77 L356.41 241.99 L356.33 241.21 L356.26 240.43 L356.21 239.67 L356.16 238.91 L356.13 238.15 L356.11 237.41 L356.11 236.69 L356.14 235.99 L356.19 235.33 L356.27 234.71 L356.38 234.16 L356.52 233.72 L356.65 233.44 L356.72 233.33 L356.79 233.28 L356.96 233.22 L357.13 233.18 L357.22 233.18 L357.22 233.18 L357.17 233.14 L357.13 233.09 L357.13 233.11 L357.13 233.25 L357.08 233.52 L356.96 233.89 L356.76 234.28 L356.45 234.75 L356.02 235.35 L355.55 236.00 L355.08 236.64 L354.61 237.29 L354.14 237.94 L353.66 238.58 L353.18 239.22 L352.71 239.87 L352.23 240.51 L351.75 241.16 L351.27 241.80 L350.79 242.44 L350.31 243.09 L349.83 243.73 L349.34 244.38 L348.86 245.02 L348.38 245.66 L347.89 246.31 L347.41 246.95 L346.93 247.60 L346.44 248.24 L345.96 248.89 L345.48 249.54 L344.99 250.18 L344.51 250.83 L344.03 251.48 L343.55 252.13 L343.07 252.78 L342.59 253.43 L342.56 254.42 L342.16 255.13 L341.76 255.84 L341.37 256.55 L340.97 257.27 L340.58 257.98Z"/><circle cx="342.00" cy="259.00" r="1.75"/><path d="M392.93 354.68 L393.45 354.11 L393.95 353.58 L394.47 353.09 L395.00 352.62 L395.53 352.19 L396.08 351.80 L396.64 351.45 L397.21 351.14 L397.79 350.88 L398.39 350.67 L399.02 350.50 L399.66 350.37 L400.33 350.28 L401.02 350.23 L401.73 350.20 L402.45 350.21 L403.17 350.23 L403.89 350.29 L404.59 350.37 L405.28 350.49 L405.96 350.63 L406.61 350.81 L407.24 351.02 L407.84 351.27 L408.41 351.56 L408.94 351.88 L409.43 352.23 L409.88 352.62 L410.27 353.04 L410.60 353.49 L410.88 353.97 L411.10 354.47 L411.27 355.00 L411.37 355.55 L411.42 356.13 L411.41 356.70 L411.34 357.23 L411.21 357.74 L411.00 358.26 L410.73 358.79 L410.39 359.31 L410.00 359.83 L409.56 360.34 L409.08 360.84 L408.57 361.33 L408.03 361.81 L407.46 362.28 L406.87 362.74 L406.27 363.19 L405.65 363.63 L405.02 364.06 L404.38 364.49 L403.72 364.91 L403.06 365.32 L402.39 365.73 L401.72 366.14 L401.04 366.54 L400.35 366.94 L399.67 367.34 L398.97 367.74 L398.28 368.15 L397.58 368.55 L396.88 368.96 L396.18 369.37 L395.48 369.79 L394.77 370.21 L394.07 370.65 L393.37 371.10 L392.66 371.56 L391.95 372.05 L391.23 372.59 L390.52 373.17 L389.85 373.79 L389.19 374.47 L388.55 375.22 L387.95 376.08 L387.41 377.15 L387.07 378.57 L387.37 380.39 L388.58 381.86 L390.05 382.54 L391.30 382.70 L392.22 382.70 L393.02 382.70 L393.82 382.70 L394.62 382.70 L395.42 382.70 L396.23 382.71 L397.03 382.71 L397.83 382.71 L398.63 382.72 L399.43 382.72 L400.23 382.73 L401.03 382.71 L401.83 382.64 L402.63 382.57 L403.43 382.51 L404.23 382.45 L405.03 382.38 L405.83 382.32 L406.63 382.27 L407.43 382.21 L408.23 382.16 L409.03 382.11 L409.83 382.06 L410.63 382.01 L411.44 381.97 L412.24 381.93 L413.04 381.89 L413.84 381.85 L414.64 381.82 L415.45 381.79 L416.25 381.77 L417.05 381.74 L417.86 381.73 L418.66 381.71 L419.47 381.70 L419.53 380.90 L418.74 380.76 L417.94 380.62 L417.14 380.49 L416.34 380.35 L415.54 380.23 L414.74 380.10 L413.94 379.98 L413.14 379.86 L412.34 379.75 L411.54 379.63 L410.73 379.52 L409.93 379.41 L409.13 379.31 L408.32 379.21 L407.52 379.11 L406.71 379.01 L405.91 378.91 L405.10 378.82 L404.30 378.72 L403.49 378.63 L402.69 378.54 L401.88 378.45 L401.07 378.37 L400.27 378.33 L399.46 378.32 L398.66 378.32 L397.85 378.31 L397.04 378.31 L396.24 378.31 L395.43 378.30 L394.63 378.30 L393.83 378.30 L393.02 378.30 L392.22 378.30 L391.53 378.30 L391.19 378.29 L391.20 378.33 L391.38 378.59 L391.46 378.84 L391.52 378.72 L391.72 378.35 L392.04 377.90 L392.44 377.43 L392.90 376.96 L393.41 376.49 L393.95 376.05 L394.51 375.63 L395.12 375.21 L395.76 374.79 L396.41 374.38 L397.07 373.97 L397.74 373.56 L398.42 373.16 L399.10 372.76 L399.79 372.35 L400.48 371.95 L401.18 371.55 L401.88 371.15 L402.57 370.74 L403.27 370.33 L403.98 369.91 L404.68 369.49 L405.38 369.06 L406.08 368.62 L406.78 368.17 L407.47 367.71 L408.17 367.24 L408.86 366.75 L409.54 366.24 L410.22 365.71 L410.89 365.15 L411.55 364.57 L412.20 363.95 L412.83 363.29 L413.43 362.58 L414.01 361.82 L414.54 360.99 L415.00 360.09 L415.39 359.12 L415.66 358.08 L415.80 357.02 L415.82 355.98 L415.73 354.96 L415.54 353.93 L415.22 352.93 L414.80 351.97 L414.27 351.06 L413.65 350.22 L412.95 349.47 L412.18 348.79 L411.37 348.21 L410.53 347.70 L409.66 347.27 L408.78 346.90 L407.89 346.60 L406.99 346.36 L406.10 346.16 L405.21 346.02 L404.32 345.91 L403.43 345.84 L402.55 345.81 L401.66 345.80 L400.77 345.83 L399.86 345.90 L398.93 346.03 L398.00 346.22 L397.07 346.47 L396.16 346.79 L395.28 347.19 L394.43 347.64 L393.63 348.14 L392.87 348.68 L392.16 349.26 L391.48 349.85 L390.84 350.47 L390.23 351.10 L389.67 351.72Z"/><circle cx="391.30" cy="353.20" r="2.20"/><path d="M433.56 368.90 L434.37 368.98 L435.18 369.06 L435.98 369.13 L436.79 369.21 L437.59 369.29 L438.40 369.37 L439.21 369.45 L440.01 369.53 L440.82 369.61 L441.62 369.69 L442.43 369.77 L443.23 369.76 L444.03 369.73 L444.84 369.71 L445.64 369.68 L446.44 369.65 L447.25 369.63 L448.05 369.60 L448.85 369.57 L449.65 369.55 L450.46 369.52 L451.26 369.50 L452.06 369.47 L452.87 369.44 L453.67 369.42 L454.47 369.39 L455.27 369.37 L456.08 369.34 L456.88 369.32 L457.68 369.29 L458.48 369.27 L459.29 369.24 L460.09 369.22 L460.89 369.19 L461.70 369.17 L462.50 369.15 L463.30 369.12 L464.10 369.10 L464.91 369.07 L465.71 369.05 L466.51 369.03 L467.32 369.00 L468.12 368.98 L468.92 368.96 L469.72 368.94 L470.53 368.91 L471.33 368.89 L472.13 368.87 L472.94 368.85 L473.74 368.82 L474.54 368.80 L475.34 368.78 L476.15 368.76 L476.95 368.74 L477.75 368.72 L478.56 368.69 L479.36 368.67 L480.16 368.65 L480.96 368.63 L481.77 368.61 L482.57 368.59 L483.37 368.57 L484.18 368.55 L484.98 368.53 L485.78 368.51 L486.59 368.49 L487.39 368.47 L488.19 368.45 L488.99 368.43 L489.80 368.41 L490.60 368.39 L491.40 368.37 L492.21 368.36 L493.01 368.34 L493.81 368.32 L494.61 368.30 L495.42 368.28 L496.22 368.26 L497.02 368.25 L497.83 368.23 L498.63 368.21 L499.43 368.19 L500.24 368.18 L501.04 368.16 L501.84 368.14 L502.65 368.13 L503.45 368.11 L504.25 368.09 L505.05 368.08 L505.86 368.06 L506.66 368.04 L507.46 368.03 L508.27 368.01 L509.07 368.00 L509.87 367.98 L510.67 367.97 L511.48 367.95 L512.28 367.94 L513.08 367.92 L513.89 367.91 L514.69 367.89 L515.49 367.88 L516.30 367.86 L517.10 367.85 L517.90 367.84 L518.71 367.82 L519.51 367.81 L520.31 367.79 L521.12 367.78 L521.92 367.77 L522.72 367.76 L523.52 367.74 L524.33 367.73 L525.13 367.72 L525.93 367.70 L526.74 367.69 L527.54 367.68 L528.34 367.67 L529.15 367.66 L529.95 367.65 L530.75 367.63 L531.56 367.62 L532.36 367.61 L533.16 367.60 L533.96 367.59 L534.77 367.58 L535.57 367.57 L536.37 367.56 L537.18 367.55 L537.98 367.54 L538.78 367.53 L539.59 367.52 L540.39 367.51 L541.19 367.50 L542.00 367.49 L542.80 367.48 L543.60 367.48 L544.41 367.47 L545.21 367.46 L546.01 367.45 L545.99 362.15 L545.18 362.15 L544.38 362.15 L543.58 362.15 L542.77 362.15 L541.97 362.15 L541.16 362.15 L540.36 362.15 L539.55 362.15 L538.75 362.15 L537.95 362.15 L537.14 362.15 L536.34 362.15 L535.53 362.15 L534.73 362.15 L533.92 362.15 L533.12 362.15 L532.32 362.15 L531.51 362.16 L530.71 362.16 L529.90 362.16 L529.10 362.16 L528.29 362.17 L527.49 362.17 L526.69 362.17 L525.88 362.17 L525.08 362.18 L524.27 362.18 L523.47 362.18 L522.66 362.19 L521.86 362.19 L521.06 362.19 L520.25 362.20 L519.45 362.20 L518.64 362.21 L517.84 362.21 L517.03 362.22 L516.23 362.22 L515.43 362.22 L514.62 362.23 L513.82 362.24 L513.01 362.24 L512.21 362.25 L511.40 362.25 L510.60 362.26 L509.80 362.26 L508.99 362.27 L508.19 362.28 L507.38 362.28 L506.58 362.29 L505.77 362.30 L504.97 362.30 L504.17 362.31 L503.36 362.32 L502.56 362.32 L501.75 362.33 L500.95 362.34 L500.15 362.35 L499.34 362.36 L498.54 362.36 L497.73 362.37 L496.93 362.38 L496.12 362.39 L495.32 362.40 L494.52 362.41 L493.71 362.42 L492.91 362.42 L492.10 362.43 L491.30 362.44 L490.49 362.45 L489.69 362.46 L488.89 362.47 L488.08 362.48 L487.28 362.49 L486.47 362.50 L485.67 362.51 L484.86 362.52 L484.06 362.54 L483.26 362.55 L482.45 362.56 L481.65 362.57 L480.84 362.58 L480.04 362.59 L479.24 362.60 L478.43 362.62 L477.63 362.63 L476.82 362.64 L476.02 362.65 L475.21 362.66 L474.41 362.68 L473.61 362.69 L472.80 362.70 L472.00 362.71 L471.19 362.73 L470.39 362.74 L469.59 362.75 L468.78 362.77 L467.98 362.78 L467.17 362.80 L466.37 362.81 L465.56 362.82 L464.76 362.84 L463.96 362.85 L463.15 362.87 L462.35 362.88 L461.54 362.90 L460.74 362.91 L459.93 362.93 L459.13 362.94 L458.33 362.96 L457.52 362.97 L456.72 362.99 L455.91 363.00 L455.11 363.02 L454.31 363.04 L453.50 363.05 L452.70 363.07 L451.89 363.09 L451.09 363.10 L450.29 363.12 L449.48 363.14 L448.68 363.15 L447.87 363.17 L447.07 363.19 L446.27 363.20 L445.46 363.22 L444.66 363.24 L443.85 363.26 L443.05 363.28 L442.25 363.31 L441.44 363.44 L440.64 363.57 L439.84 363.69 L439.04 363.82 L438.24 363.94 L437.44 364.07 L436.64 364.20 L435.84 364.32 L435.04 364.45 L434.24 364.57 L433.44 364.70Z"/><circle cx="433.50" cy="366.80" r="2.10"/><circle cx="546.00" cy="364.80" r="2.65"/><path d="M668.47 341.32 L669.26 341.50 L670.05 341.68 L670.84 341.86 L671.62 342.04 L672.41 342.22 L673.19 342.41 L673.98 342.59 L674.76 342.78 L675.54 342.98 L676.32 343.17 L677.10 343.36 L677.88 343.56 L678.66 343.77 L679.44 343.97 L680.21 344.17 L680.98 344.38 L681.76 344.60 L682.53 344.81 L683.30 345.02 L684.07 345.24 L684.84 345.46 L685.61 345.68 L686.36 345.91 L687.14 346.14 L687.92 346.26 L688.69 346.38 L689.47 346.50 L690.26 346.63 L691.03 346.76 L691.80 346.89 L692.58 347.03 L693.36 347.16 L694.13 347.30 L694.90 347.45 L695.68 347.60 L696.45 347.75 L697.21 347.91 L698.00 348.07 L698.76 348.22 L699.52 348.39 L700.30 348.57 L701.06 348.73 L701.81 348.91 L702.59 349.10 L703.34 349.28 L704.09 349.47 L704.86 349.67 L705.61 349.86 L706.35 350.06 L707.12 350.28 L707.86 350.48 L708.60 350.70 L709.36 350.93 L710.09 351.15 L710.83 351.39 L711.58 351.63 L712.30 351.87 L713.04 352.13 L713.76 352.38 L714.48 352.64 L715.20 352.91 L715.91 353.19 L716.63 353.48 L717.33 353.76 L718.03 354.07 L718.72 354.37 L719.40 354.69 L720.08 355.01 L720.74 355.35 L721.41 355.69 L722.05 356.05 L722.69 356.41 L723.32 356.79 L723.93 357.17 L724.52 357.57 L725.10 357.97 L725.64 358.39 L726.19 358.83 L726.69 359.26 L727.16 359.71 L727.62 360.19 L728.01 360.64 L728.35 361.10 L728.67 361.59 L728.94 362.06 L729.15 362.53 L729.29 362.96 L729.38 363.38 L729.42 363.81 L729.42 364.24 L729.36 364.68 L729.25 365.13 L729.08 365.60 L728.87 366.08 L728.61 366.54 L728.30 367.00 L727.92 367.50 L727.51 367.99 L727.08 368.45 L726.59 368.91 L726.09 369.37 L725.57 369.80 L725.00 370.25 L724.44 370.67 L723.84 371.08 L723.24 371.48 L722.62 371.87 L721.99 372.25 L721.35 372.62 L720.70 372.98 L720.04 373.33 L719.37 373.68 L718.69 374.01 L718.00 374.34 L717.32 374.66 L716.61 374.97 L715.92 375.28 L715.22 375.57 L714.50 375.87 L713.79 376.15 L713.06 376.43 L712.35 376.71 L711.63 376.97 L710.89 377.23 L710.16 377.49 L709.42 377.74 L708.68 377.99 L707.95 378.22 L707.20 378.46 L706.46 378.70 L705.72 378.92 L704.96 379.14 L704.21 379.36 L703.47 379.57 L702.70 379.78 L701.95 379.99 L701.20 380.19 L700.43 380.39 L699.67 380.59 L698.92 380.77 L698.15 380.96 L697.38 381.15 L696.62 381.32 L695.85 381.50 L695.08 381.68 L694.32 381.85 L693.55 382.01 L692.77 382.18 L692.01 382.34 L691.24 382.49 L690.46 382.65 L689.68 382.80 L688.92 382.95 L688.14 383.10 L687.35 383.24 L686.59 383.38 L685.82 383.52 L685.03 383.65 L684.25 383.79 L683.48 383.92 L682.70 384.04 L681.91 384.17 L681.13 384.30 L680.36 384.41 L679.57 384.53 L678.78 384.65 L678.00 384.76 L677.23 384.87 L676.43 384.98 L675.65 385.09 L674.87 385.19 L674.09 385.29 L673.29 385.39 L672.51 385.49 L671.73 385.58 L670.94 385.67 L670.14 385.76 L669.36 385.85 L668.58 385.94 L667.79 386.02 L666.99 386.10 L666.21 386.19 L665.43 386.26 L664.64 386.34 L663.84 386.41 L663.06 386.49 L662.28 386.55 L661.48 386.62 L660.68 386.69 L659.90 386.75 L659.11 386.81 L658.32 386.87 L657.52 386.93 L656.74 386.99 L655.95 387.04 L655.15 387.09 L654.35 387.14 L653.57 387.19 L652.78 387.24 L651.99 387.28 L651.19 387.33 L650.40 387.37 L649.62 387.40 L648.82 387.44 L648.02 387.48 L647.23 387.51 L646.45 387.54 L645.65 387.57 L644.85 387.60 L644.06 387.63 L643.28 387.65 L642.48 387.67 L641.67 387.69 L640.89 387.71 L640.10 387.73 L639.30 387.74 L638.50 387.76 L637.72 387.77 L636.93 387.78 L636.13 387.78 L635.33 387.79 L634.54 387.80 L633.76 387.80 L632.96 387.79 L632.16 387.79 L631.37 387.79 L630.58 387.79 L629.79 387.78 L628.98 387.77 L628.20 387.76 L627.41 387.75 L626.61 387.73 L625.81 387.71 L625.02 387.70 L624.24 387.68 L623.44 387.65 L622.64 387.63 L621.85 387.60 L621.07 387.57 L620.27 387.54 L619.47 387.51 L618.69 387.48 L617.90 387.44 L617.10 387.40 L616.30 387.36 L615.52 387.32 L614.74 387.28 L613.94 387.23 L613.14 387.18 L612.36 387.14 L611.57 387.08 L610.77 387.03 L609.98 386.97 L609.20 386.92 L608.41 386.85 L607.61 386.79 L606.82 386.73 L606.04 386.66 L605.25 386.59 L604.46 386.52 L603.67 386.45 L602.89 386.37 L602.10 386.29 L601.30 386.21 L600.52 386.13 L599.74 386.04 L598.95 385.95 L598.16 385.86 L597.38 385.77 L596.60 385.68 L595.81 385.58 L595.02 385.48 L594.25 385.38 L593.46 385.27 L592.67 385.16 L591.90 385.06 L591.12 384.94 L590.33 384.82 L589.55 384.71 L588.78 384.59 L588.00 384.46 L587.21 384.33 L586.44 384.21 L585.67 384.07 L584.88 383.93 L584.11 383.80 L583.35 383.65 L582.57 383.50 L581.79 383.36 L581.03 383.21 L580.26 383.05 L579.48 382.89 L578.72 382.73 L577.95 382.56 L577.18 382.38 L576.42 382.22 L575.66 382.03 L574.89 381.85 L574.14 381.67 L573.39 381.47 L572.61 381.28 L571.87 381.08 L571.12 380.87 L570.36 380.66 L569.62 380.45 L568.87 380.23 L568.12 380.01 L567.39 379.78 L566.64 379.54 L565.91 379.30 L565.19 379.06 L564.44 378.80 L563.73 378.55 L563.00 378.28 L562.28 378.01 L561.58 377.73 L560.86 377.44 L560.17 377.15 L559.47 376.84 L558.78 376.54 L558.10 376.21 L557.42 375.89 L556.76 375.55 L556.10 375.21 L555.46 374.84 L554.82 374.48 L554.20 374.10 L553.59 373.72 L553.01 373.32 L552.43 372.90 L551.89 372.48 L551.36 372.04 L550.86 371.60 L550.41 371.16 L549.97 370.68 L549.57 370.21 L549.24 369.75 L548.95 369.29 L548.71 368.81 L548.52 368.35 L548.38 367.90 L548.30 367.47 L548.27 367.04 L548.29 366.63 L548.36 366.20 L548.49 365.75 L548.67 365.28 L548.91 364.79 L549.19 364.31 L549.51 363.84 L549.89 363.37 L550.33 362.87 L550.76 362.41 L551.24 361.96 L551.77 361.50 L552.30 361.06 L552.87 360.63 L553.43 360.21 L554.03 359.81 L554.64 359.40 L555.26 359.02 L555.90 358.64 L556.55 358.27 L557.20 357.91 L557.86 357.57 L558.53 357.22 L559.21 356.89 L559.90 356.56 L560.59 356.25 L561.29 355.94 L561.99 355.63 L562.70 355.34 L563.41 355.05 L564.12 354.77 L564.85 354.49 L565.57 354.22 L566.29 353.95 L567.03 353.69 L567.75 353.44 L568.50 353.19 L569.23 352.94 L569.97 352.71 L570.73 352.47 L571.46 352.24 L572.20 352.02 L572.97 351.79 L573.71 351.57 L574.46 351.37 L575.23 351.15 L575.97 350.95 L576.72 350.75 L577.50 350.55 L578.25 350.36 L579.01 350.17 L579.78 349.98 L580.54 349.80 L581.30 349.62 L582.07 349.45 L582.85 349.27 L583.61 349.10 L584.38 348.94 L585.16 348.77 L585.92 348.61 L586.69 348.46 L587.47 348.31 L588.24 348.15 L589.01 348.01 L589.79 347.86 L590.57 347.68 L591.33 347.50 L592.10 347.33 L592.88 347.16 L593.65 346.98 L594.42 346.82 L595.19 346.66 L595.98 346.49 L596.75 346.33 L597.52 346.18 L598.30 346.02 L599.09 345.87 L599.86 345.71 L600.64 345.57 L601.42 345.42 L602.20 345.28 L602.98 345.14 L603.76 345.00 L604.55 344.86 L605.33 344.73 L606.11 344.60 L606.90 344.47 L607.69 344.34 L608.47 344.21 L609.25 344.09 L610.04 343.97 L610.83 343.85 L611.61 343.73 L612.40 343.61 L613.19 343.50 L613.98 343.39 L614.77 343.28 L615.55 343.17 L616.35 343.07 L617.14 342.96 L617.93 342.86 L618.72 342.76 L619.51 342.66 L620.31 342.57 L621.09 342.47 L621.88 342.38 L622.68 342.29 L623.48 342.20 L624.26 342.12 L625.06 342.03 L625.85 341.95 L626.65 341.87 L627.44 341.79 L628.23 341.72 L629.03 341.64 L629.83 341.57 L630.62 341.49 L631.42 341.43 L632.21 341.36 L633.01 341.29 L633.81 341.23 L634.60 341.17 L635.40 341.11 L636.20 341.05 L637.00 340.99 L637.79 340.94 L638.59 340.89 L639.39 340.83 L640.19 340.78 L640.99 340.74 L641.79 340.69 L642.59 340.65 L643.38 340.61 L644.18 340.57 L644.98 340.53 L645.78 340.50 L646.58 340.46 L646.59 339.46 L645.78 339.42 L644.98 339.38 L644.18 339.34 L643.38 339.30 L642.58 339.27 L641.77 339.24 L640.97 339.20 L640.17 339.17 L639.36 339.15 L638.56 339.12 L637.76 339.10 L636.95 339.07 L636.15 339.06 L635.35 339.04 L634.54 339.02 L633.74 339.01 L632.93 339.00 L632.13 338.99 L631.33 338.98 L630.52 338.97 L629.71 338.96 L628.91 338.96 L628.11 338.96 L627.30 338.96 L626.49 338.96 L625.69 338.97 L624.89 338.98 L624.08 338.98 L623.27 338.99 L622.47 339.01 L621.67 339.02 L620.86 339.03 L620.05 339.06 L619.24 339.08 L618.44 339.10 L617.63 339.12 L616.82 339.15 L616.02 339.18 L615.22 339.21 L614.41 339.24 L613.60 339.27 L612.80 339.31 L612.00 339.35 L611.18 339.39 L610.37 339.43 L609.57 339.48 L608.77 339.52 L607.96 339.57 L607.15 339.63 L606.35 339.68 L605.54 339.73 L604.73 339.79 L603.92 339.85 L603.12 339.92 L602.32 339.98 L601.50 340.05 L600.70 340.12 L599.90 340.19 L599.09 340.26 L598.27 340.34 L597.47 340.42 L596.67 340.50 L595.86 340.58 L595.05 340.68 L594.25 340.76 L593.45 340.86 L592.63 340.95 L591.83 341.05 L591.03 341.15 L590.22 341.25 L589.40 341.36 L588.61 341.47 L587.81 341.62 L587.00 341.77 L586.21 341.93 L585.42 342.09 L584.61 342.25 L583.81 342.42 L583.03 342.58 L582.23 342.75 L581.43 342.93 L580.64 343.11 L579.85 343.29 L579.04 343.47 L578.25 343.67 L577.47 343.86 L576.67 344.05 L575.87 344.26 L575.09 344.46 L574.29 344.67 L573.50 344.89 L572.72 345.10 L571.93 345.32 L571.13 345.56 L570.36 345.78 L569.56 346.02 L568.77 346.27 L568.00 346.51 L567.21 346.76 L566.43 347.03 L565.65 347.29 L564.87 347.56 L564.09 347.84 L563.31 348.12 L562.53 348.41 L561.77 348.71 L560.99 349.01 L560.22 349.33 L559.45 349.65 L558.68 349.99 L557.92 350.32 L557.15 350.67 L556.39 351.03 L555.63 351.40 L554.87 351.79 L554.12 352.19 L553.37 352.60 L552.62 353.02 L551.89 353.47 L551.14 353.92 L550.42 354.40 L549.68 354.90 L548.97 355.43 L548.26 355.97 L547.55 356.55 L546.88 357.14 L546.19 357.79 L545.52 358.49 L544.91 359.20 L544.28 359.97 L543.70 360.83 L543.18 361.73 L542.71 362.68 L542.32 363.70 L542.01 364.79 L541.82 365.94 L541.77 367.13 L541.85 368.30 L542.06 369.44 L542.39 370.52 L542.80 371.54 L543.29 372.48 L543.84 373.38 L544.46 374.22 L545.09 374.98 L545.73 375.67 L546.42 376.35 L547.13 376.98 L547.82 377.56 L548.55 378.12 L549.27 378.63 L550.01 379.14 L550.76 379.61 L551.50 380.07 L552.26 380.50 L553.01 380.93 L553.77 381.32 L554.53 381.71 L555.31 382.08 L556.07 382.44 L556.85 382.79 L557.61 383.12 L558.39 383.45 L559.16 383.76 L559.95 384.07 L560.73 384.36 L561.51 384.65 L562.30 384.94 L563.07 385.20 L563.86 385.47 L564.65 385.73 L565.43 385.98 L566.23 386.23 L567.01 386.46 L567.80 386.69 L568.60 386.92 L569.38 387.14 L570.18 387.36 L570.98 387.57 L571.76 387.77 L572.56 387.97 L573.37 388.17 L574.15 388.36 L574.95 388.55 L575.76 388.73 L576.54 388.90 L577.35 389.08 L578.15 389.25 L578.94 389.41 L579.74 389.58 L580.55 389.74 L581.35 389.89 L582.14 390.04 L582.95 390.19 L583.75 390.33 L584.54 390.47 L585.35 390.61 L586.16 390.75 L586.96 390.88 L587.76 391.01 L588.57 391.13 L589.37 391.25 L590.16 391.37 L590.98 391.49 L591.79 391.60 L592.58 391.71 L593.38 391.82 L594.20 391.93 L595.00 392.03 L595.80 392.13 L596.61 392.23 L597.42 392.32 L598.22 392.41 L599.02 392.50 L599.83 392.59 L600.64 392.68 L601.44 392.76 L602.25 392.84 L603.06 392.92 L603.87 392.99 L604.67 393.06 L605.48 393.14 L606.29 393.20 L607.09 393.27 L607.89 393.33 L608.71 393.40 L609.52 393.46 L610.32 393.51 L611.12 393.57 L611.94 393.62 L612.75 393.67 L613.55 393.72 L614.35 393.77 L615.17 393.82 L615.98 393.86 L616.78 393.90 L617.59 393.93 L618.40 393.97 L619.22 394.01 L620.02 394.04 L620.82 394.07 L621.63 394.10 L622.45 394.12 L623.25 394.15 L624.05 394.17 L624.87 394.20 L625.68 394.21 L626.48 394.23 L627.29 394.24 L628.10 394.26 L628.92 394.27 L629.72 394.28 L630.52 394.29 L631.34 394.29 L632.15 394.29 L632.95 394.29 L633.75 394.30 L634.57 394.30 L635.38 394.29 L636.18 394.28 L636.99 394.28 L637.80 394.27 L638.62 394.25 L639.42 394.24 L640.22 394.23 L641.03 394.21 L641.85 394.19 L642.65 394.17 L643.45 394.15 L644.27 394.13 L645.08 394.10 L645.88 394.07 L646.68 394.04 L647.50 394.01 L648.31 393.97 L649.11 393.93 L649.91 393.90 L650.73 393.86 L651.54 393.82 L652.34 393.77 L653.14 393.73 L653.96 393.68 L654.77 393.63 L655.57 393.58 L656.37 393.53 L657.19 393.47 L658.00 393.41 L658.80 393.35 L659.60 393.29 L660.41 393.23 L661.23 393.16 L662.03 393.10 L662.82 393.03 L663.64 392.96 L664.45 392.88 L665.25 392.81 L666.05 392.73 L666.86 392.65 L667.67 392.57 L668.47 392.49 L669.27 392.40 L670.08 392.31 L670.89 392.22 L671.69 392.13 L672.49 392.04 L673.30 391.94 L674.11 391.84 L674.90 391.74 L675.71 391.63 L676.52 391.53 L677.32 391.42 L678.11 391.31 L678.92 391.20 L679.73 391.08 L680.52 390.96 L681.32 390.84 L682.13 390.72 L682.94 390.59 L683.73 390.46 L684.53 390.33 L685.34 390.20 L686.14 390.06 L686.92 389.92 L687.73 389.78 L688.54 389.63 L689.33 389.49 L690.13 389.34 L690.93 389.18 L691.73 389.02 L692.52 388.87 L693.32 388.70 L694.12 388.53 L694.91 388.37 L695.71 388.20 L696.51 388.02 L697.30 387.84 L698.09 387.66 L698.89 387.47 L699.68 387.28 L700.47 387.09 L701.27 386.89 L702.06 386.68 L702.84 386.48 L703.64 386.27 L704.43 386.05 L705.21 385.83 L706.01 385.61 L706.80 385.38 L707.57 385.15 L708.37 384.91 L709.16 384.66 L709.93 384.42 L710.72 384.16 L711.50 383.90 L712.28 383.63 L713.07 383.36 L713.83 383.08 L714.62 382.80 L715.40 382.50 L716.16 382.20 L716.94 381.89 L717.71 381.58 L718.48 381.25 L719.25 380.91 L720.01 380.57 L720.78 380.22 L721.53 379.86 L722.30 379.48 L723.05 379.09 L723.80 378.69 L724.55 378.27 L725.30 377.85 L726.04 377.40 L726.77 376.94 L727.50 376.45 L728.23 375.95 L728.95 375.41 L729.64 374.87 L730.35 374.28 L731.03 373.66 L731.70 373.01 L732.37 372.30 L732.99 371.57 L733.58 370.79 L734.16 369.93 L734.68 368.99 L735.12 368.01 L735.48 366.97 L735.75 365.87 L735.90 364.72 L735.92 363.55 L735.81 362.39 L735.56 361.24 L735.20 360.15 L734.75 359.16 L734.24 358.23 L733.69 357.38 L733.07 356.56 L732.41 355.80 L731.76 355.12 L731.08 354.46 L730.36 353.84 L729.66 353.28 L728.94 352.72 L728.20 352.21 L727.47 351.72 L726.72 351.25 L725.98 350.80 L725.22 350.37 L724.46 349.96 L723.70 349.56 L722.94 349.18 L722.17 348.81 L721.40 348.45 L720.63 348.11 L719.86 347.78 L719.07 347.46 L718.31 347.15 L717.52 346.84 L716.75 346.55 L715.96 346.26 L715.17 345.98 L714.40 345.72 L713.60 345.45 L712.82 345.20 L712.03 344.95 L711.23 344.70 L710.46 344.47 L709.66 344.24 L708.86 344.01 L708.08 343.80 L707.28 343.58 L706.48 343.37 L705.70 343.17 L704.90 342.97 L704.10 342.78 L703.31 342.59 L702.51 342.40 L701.70 342.22 L700.92 342.05 L700.12 341.87 L699.31 341.70 L698.52 341.54 L697.72 341.37 L696.91 341.22 L696.12 341.07 L695.32 340.91 L694.51 340.77 L693.71 340.63 L692.92 340.49 L692.11 340.35 L691.30 340.21 L690.51 340.09 L689.70 339.96 L688.89 339.83 L688.09 339.71 L687.28 339.71 L686.45 339.70 L685.63 339.70 L684.82 339.71 L684.00 339.71 L683.18 339.72 L682.36 339.74 L681.55 339.75 L680.73 339.77 L679.91 339.79 L679.10 339.81 L678.29 339.84 L677.47 339.86 L676.66 339.90 L675.85 339.93 L675.03 339.96 L674.22 340.00 L673.41 340.04 L672.60 340.08 L671.79 340.13 L670.98 340.17 L670.17 340.22 L669.36 340.28 L668.55 340.33Z"/><path d="M864.27 581.73 L864.90 581.28 L865.51 580.85 L866.13 580.45 L866.75 580.07 L867.37 579.72 L868.00 579.41 L868.64 579.13 L869.28 578.88 L869.93 578.67 L870.59 578.50 L871.27 578.36 L871.95 578.26 L872.65 578.20 L873.36 578.16 L874.08 578.15 L874.79 578.17 L875.48 578.22 L876.15 578.31 L876.79 578.44 L877.38 578.60 L877.92 578.81 L878.37 579.04 L878.71 579.29 L878.91 579.51 L879.01 579.69 L879.04 579.88 L879.00 580.19 L878.87 580.62 L878.66 581.07 L878.37 581.53 L878.00 581.99 L877.55 582.46 L877.06 582.92 L876.52 583.37 L875.95 583.80 L875.35 584.22 L874.74 584.63 L874.11 585.02 L873.46 585.39 L872.80 585.76 L872.13 586.11 L871.45 586.44 L870.76 586.77 L870.07 587.07 L869.37 587.37 L868.66 587.65 L867.95 587.92 L867.24 588.17 L866.71 588.35 L868.32 592.30 L869.00 592.07 L869.69 591.87 L870.39 591.70 L871.11 591.54 L871.83 591.41 L872.56 591.30 L873.29 591.21 L874.03 591.15 L874.77 591.11 L875.50 591.08 L876.24 591.09 L876.97 591.11 L877.69 591.16 L878.40 591.24 L879.09 591.34 L879.75 591.48 L880.36 591.65 L880.91 591.86 L881.49 592.16 L882.11 592.51 L882.72 592.88 L883.31 593.28 L883.88 593.69 L884.42 594.13 L884.93 594.60 L885.41 595.09 L885.87 595.59 L886.28 596.12 L886.66 596.67 L887.00 597.23 L887.29 597.81 L887.54 598.40 L887.74 599.00 L887.89 599.62 L887.99 600.23 L888.03 600.85 L888.03 601.48 L887.97 602.11 L887.85 602.80 L887.72 603.48 L887.55 604.11 L887.34 604.71 L887.09 605.30 L886.78 605.87 L886.44 606.41 L886.06 606.93 L885.63 607.43 L885.17 607.90 L884.68 608.35 L884.15 608.76 L883.59 609.15 L883.01 609.51 L882.40 609.84 L881.77 610.15 L881.12 610.43 L880.46 610.68 L879.78 610.90 L879.09 611.10 L878.38 611.28 L877.67 611.43 L876.95 611.55 L876.23 611.70 L875.50 611.84 L874.76 611.96 L874.02 612.06 L873.27 612.13 L872.55 612.19 L871.84 612.20 L871.13 612.17 L870.43 612.11 L869.72 612.00 L869.01 611.85 L868.31 611.67 L867.62 611.44 L866.94 611.17 L866.26 610.87 L865.60 610.53 L864.95 610.16 L864.31 609.75 L863.69 609.31 L863.09 608.85 L862.50 608.35 L861.93 607.84 L861.38 607.29 L860.85 606.73 L860.34 606.14 L859.85 605.53 L859.38 604.90 L858.93 604.25 L858.07 604.75 L858.43 605.48 L858.82 606.21 L859.24 606.93 L859.68 607.63 L860.16 608.32 L860.66 608.98 L861.19 609.64 L861.75 610.27 L862.34 610.88 L862.96 611.47 L863.60 612.03 L864.28 612.56 L864.98 613.07 L865.71 613.54 L866.47 613.97 L867.26 614.37 L868.07 614.72 L868.91 615.03 L869.76 615.30 L870.64 615.51 L871.52 615.68 L872.42 615.80 L873.30 615.86 L874.16 615.90 L875.02 615.92 L875.88 615.91 L876.75 615.87 L877.62 615.80 L878.48 615.65 L879.34 615.47 L880.19 615.26 L881.05 615.01 L881.89 614.73 L882.73 614.42 L883.56 614.06 L884.37 613.67 L885.17 613.23 L885.96 612.74 L886.71 612.21 L887.45 611.63 L888.15 611.01 L888.81 610.33 L889.43 609.60 L890.00 608.83 L890.51 608.02 L890.96 607.17 L891.35 606.28 L891.66 605.38 L891.91 604.45 L892.09 603.56 L892.23 602.66 L892.32 601.70 L892.33 600.71 L892.26 599.73 L892.10 598.76 L891.87 597.82 L891.57 596.90 L891.20 596.01 L890.76 595.15 L890.28 594.34 L889.74 593.56 L889.16 592.83 L888.54 592.14 L887.90 591.49 L887.22 590.87 L886.52 590.30 L885.79 589.76 L885.05 589.26 L884.29 588.80 L883.51 588.36 L882.65 587.93 L881.71 587.57 L880.77 587.31 L879.86 587.11 L878.96 586.97 L878.07 586.88 L877.19 586.82 L876.32 586.79 L875.45 586.78 L874.58 586.81 L873.71 586.86 L872.85 586.94 L871.99 587.04 L871.13 587.17 L870.27 587.32 L869.42 587.51 L868.56 587.72 L867.71 587.97 L866.87 588.25 L867.62 592.55 L868.61 592.24 L869.42 591.96 L870.21 591.66 L871.00 591.35 L871.78 591.02 L872.55 590.68 L873.32 590.32 L874.08 589.94 L874.83 589.55 L875.58 589.14 L876.32 588.71 L877.05 588.25 L877.78 587.77 L878.49 587.27 L879.20 586.73 L879.90 586.15 L880.58 585.51 L881.24 584.82 L881.87 584.03 L882.44 583.13 L882.90 582.12 L883.22 581.01 L883.34 579.73 L883.09 578.34 L882.47 577.10 L881.61 576.12 L880.66 575.40 L879.69 574.89 L878.73 574.52 L877.78 574.25 L876.85 574.07 L875.92 573.95 L875.01 573.88 L874.11 573.85 L873.23 573.86 L872.34 573.91 L871.44 573.99 L870.53 574.13 L869.63 574.31 L868.74 574.54 L867.86 574.82 L867.00 575.15 L866.17 575.52 L865.36 575.92 L864.59 576.35 L863.83 576.81 L863.11 577.28 L862.40 577.78 L861.73 578.27Z"/><circle cx="863.00" cy="580.00" r="2.15"/><ellipse cx="868" cy="590.2" rx="4.6" ry="3.9"/><path d="M889.68 635.38 L890.13 636.09 L890.58 636.79 L891.01 637.50 L891.45 638.20 L891.87 638.91 L892.30 639.63 L892.71 640.34 L893.12 641.06 L893.53 641.78 L894.06 642.36 L894.64 642.91 L895.20 643.45 L895.76 644.01 L896.33 644.57 L896.89 645.12 L897.44 645.69 L898.00 646.25 L898.55 646.82 L899.11 647.39 L899.66 647.96 L900.20 648.53 L900.76 649.11 L901.30 649.68 L901.84 650.26 L902.39 650.85 L902.93 651.43 L903.47 652.01 L904.01 652.60 L904.54 653.18 L905.08 653.78 L905.61 654.37 L906.14 654.96 L906.68 655.55 L907.21 656.15 L907.73 656.74 L908.26 657.34 L908.79 657.94 L909.32 658.54 L909.84 659.14 L910.37 659.74 L910.89 660.34 L911.41 660.95 L911.93 661.55 L912.45 662.16 L912.97 662.76 L913.49 663.37 L914.01 663.98 L914.52 664.59 L915.04 665.20 L915.55 665.81 L916.06 666.42 L916.58 667.04 L917.09 667.65 L917.60 668.26 L918.11 668.88 L918.62 669.49 L919.13 670.11 L919.64 670.73 L920.15 671.35 L920.65 671.96 L921.16 672.58 L921.67 673.20 L922.17 673.82 L922.68 674.44 L923.18 675.07 L923.68 675.69 L924.19 676.31 L924.69 676.93 L925.19 677.56 L925.69 678.18 L926.19 678.81 L926.69 679.43 L927.19 680.06 L927.69 680.69 L928.19 681.31 L928.68 681.94 L929.18 682.57 L929.68 683.19 L930.17 683.82 L930.67 684.45 L931.17 685.08 L931.66 685.71 L932.16 686.34 L932.65 686.97 L933.14 687.60 L933.64 688.23 L934.13 688.87 L934.62 689.50 L935.11 690.13 L935.61 690.76 L936.10 691.39 L936.59 692.03 L937.08 692.66 L937.57 693.30 L938.06 693.93 L938.55 694.56 L939.04 695.20 L939.53 695.84 L940.02 696.47 L940.50 697.11 L940.99 697.74 L941.48 698.38 L941.97 699.01 L942.46 699.65 L942.94 700.29 L943.43 700.93 L943.92 701.56 L944.41 702.20 L944.89 702.84 L945.38 703.48 L945.87 704.11 L946.35 704.75 L946.84 705.39 L947.33 706.03 L947.81 706.67 L952.19 703.33 L951.70 702.69 L951.21 702.06 L950.73 701.42 L950.24 700.78 L949.75 700.14 L949.26 699.50 L948.78 698.86 L948.29 698.22 L947.80 697.58 L947.31 696.95 L946.82 696.31 L946.33 695.67 L945.85 695.03 L945.36 694.39 L944.87 693.76 L944.38 693.12 L943.88 692.48 L943.39 691.84 L942.90 691.21 L942.41 690.57 L941.92 689.93 L941.43 689.30 L940.94 688.66 L940.44 688.02 L939.95 687.39 L939.45 686.75 L938.96 686.12 L938.47 685.48 L937.97 684.85 L937.48 684.22 L936.98 683.58 L936.48 682.95 L935.99 682.31 L935.49 681.68 L934.99 681.05 L934.49 680.42 L933.99 679.78 L933.49 679.15 L933.00 678.52 L932.49 677.89 L931.99 677.26 L931.49 676.63 L930.99 676.00 L930.49 675.37 L929.98 674.74 L929.48 674.11 L928.97 673.48 L928.47 672.86 L927.96 672.23 L927.45 671.60 L926.95 670.98 L926.44 670.35 L925.93 669.73 L925.42 669.10 L924.91 668.48 L924.40 667.86 L923.89 667.23 L923.38 666.61 L922.86 665.99 L922.35 665.37 L921.83 664.75 L921.32 664.13 L920.80 663.51 L920.28 662.89 L919.76 662.27 L919.24 661.65 L918.72 661.04 L918.20 660.42 L917.68 659.81 L917.15 659.19 L916.63 658.58 L916.10 657.96 L915.57 657.35 L915.05 656.74 L914.52 656.13 L913.99 655.52 L913.46 654.91 L912.92 654.30 L912.39 653.70 L911.85 653.09 L911.31 652.49 L910.78 651.88 L910.24 651.28 L909.69 650.68 L909.15 650.08 L908.61 649.48 L908.06 648.88 L907.51 648.29 L906.96 647.69 L906.41 647.09 L905.86 646.51 L905.30 645.91 L904.74 645.32 L904.19 644.74 L903.63 644.15 L903.06 643.56 L902.50 642.98 L901.93 642.40 L901.35 641.82 L900.78 641.24 L900.20 640.66 L899.63 640.09 L899.04 639.52 L898.45 638.95 L897.87 638.39 L897.24 637.85 L896.48 637.48 L895.72 637.09 L894.95 636.72 L894.18 636.36 L893.41 635.99 L892.64 635.64 L891.87 635.29 L891.09 634.95 L890.32 634.62Z"/><circle cx="950.00" cy="705.00" r="2.75"/><path d="M951.77 709.90 L952.56 709.80 L953.32 709.70 L954.08 709.62 L954.85 709.54 L955.61 709.47 L956.38 709.40 L957.15 709.34 L957.92 709.29 L958.69 709.25 L959.46 709.21 L960.23 709.18 L961.00 709.16 L961.77 709.14 L962.54 709.14 L963.31 709.13 L964.08 709.14 L964.86 709.15 L965.63 709.17 L966.40 709.19 L967.17 709.23 L967.95 709.26 L968.72 709.31 L969.49 709.36 L970.26 709.42 L971.03 709.49 L971.80 709.56 L972.56 709.64 L973.33 709.73 L974.10 709.82 L974.86 709.92 L975.63 710.03 L976.39 710.14 L977.15 710.26 L977.91 710.39 L978.67 710.53 L979.43 710.67 L980.18 710.82 L980.94 710.97 L981.69 711.14 L982.44 711.31 L983.18 711.49 L983.93 711.68 L984.67 711.87 L985.41 712.08 L986.15 712.28 L986.88 712.50 L987.62 712.73 L988.34 712.97 L989.07 713.21 L989.78 713.46 L990.50 713.72 L991.21 713.99 L991.91 714.27 L992.62 714.56 L993.31 714.86 L994.00 715.17 L994.69 715.49 L995.36 715.81 L996.03 716.15 L996.70 716.50 L997.35 716.85 L997.99 717.23 L998.63 717.61 L999.25 718.00 L999.87 718.40 L1000.48 718.82 L1001.07 719.25 L1001.63 719.68 L1002.20 720.14 L1002.74 720.61 L1003.27 721.08 L1003.77 721.56 L1004.25 722.06 L1004.72 722.58 L1005.15 723.11 L1005.56 723.65 L1005.94 724.19 L1006.29 724.75 L1006.61 725.31 L1006.88 725.88 L1007.12 726.46 L1007.32 727.04 L1007.48 727.62 L1007.59 728.20 L1007.66 728.79 L1007.69 729.37 L1007.67 729.96 L1007.61 730.54 L1007.50 731.12 L1007.35 731.69 L1007.16 732.27 L1006.93 732.83 L1006.65 733.39 L1006.34 733.94 L1005.99 734.48 L1005.60 735.01 L1005.18 735.53 L1004.73 736.04 L1004.25 736.53 L1003.75 737.01 L1003.24 737.48 L1002.70 737.92 L1002.13 738.36 L1001.54 738.78 L1000.94 739.19 L1000.34 739.58 L999.71 739.96 L999.07 740.33 L998.42 740.68 L997.77 741.02 L997.09 741.35 L996.41 741.67 L995.73 741.97 L995.04 742.26 L994.33 742.55 L993.63 742.81 L992.92 743.07 L992.20 743.33 L991.48 743.56 L990.75 743.79 L990.02 744.01 L989.28 744.22 L988.54 744.42 L987.80 744.61 L987.05 744.79 L986.31 744.96 L985.55 745.12 L984.80 745.28 L984.05 745.43 L983.28 745.57 L982.53 745.69 L981.76 745.82 L981.00 745.93 L980.23 746.04 L979.46 746.14 L978.69 746.23 L977.92 746.31 L977.15 746.39 L976.38 746.46 L975.61 746.52 L974.83 746.57 L974.06 746.62 L973.28 746.66 L972.50 746.69 L971.72 746.72 L970.95 746.73 L970.17 746.75 L969.39 746.75 L968.61 746.75 L967.84 746.74 L967.06 746.72 L966.28 746.70 L965.50 746.67 L964.72 746.64 L963.95 746.59 L963.15 746.54 L962.82 751.53 L963.62 751.59 L964.43 751.65 L965.26 751.70 L966.08 751.74 L966.90 751.77 L967.72 751.80 L968.54 751.82 L969.37 751.83 L970.19 751.84 L971.01 751.84 L971.84 751.83 L972.66 751.81 L973.48 751.79 L974.31 751.75 L975.13 751.72 L975.95 751.67 L976.78 751.62 L977.60 751.55 L978.42 751.48 L979.25 751.40 L980.07 751.32 L980.89 751.22 L981.71 751.12 L982.53 751.01 L983.35 750.89 L984.17 750.76 L984.98 750.62 L985.80 750.47 L986.62 750.31 L987.43 750.15 L988.25 749.97 L989.05 749.79 L989.87 749.59 L990.68 749.38 L991.48 749.17 L992.29 748.93 L993.09 748.69 L993.90 748.44 L994.69 748.17 L995.49 747.90 L996.28 747.60 L997.07 747.30 L997.85 746.98 L998.64 746.64 L999.42 746.29 L1000.19 745.93 L1000.96 745.54 L1001.72 745.14 L1002.47 744.72 L1003.22 744.28 L1003.97 743.81 L1004.70 743.33 L1005.41 742.82 L1006.12 742.29 L1006.82 741.73 L1007.51 741.13 L1008.17 740.51 L1008.81 739.86 L1009.43 739.18 L1010.03 738.46 L1010.59 737.71 L1011.13 736.91 L1011.62 736.08 L1012.06 735.21 L1012.45 734.30 L1012.78 733.36 L1013.05 732.39 L1013.24 731.40 L1013.36 730.39 L1013.41 729.38 L1013.37 728.36 L1013.27 727.36 L1013.09 726.37 L1012.84 725.40 L1012.54 724.46 L1012.17 723.55 L1011.76 722.68 L1011.31 721.84 L1010.82 721.03 L1010.29 720.25 L1009.74 719.51 L1009.17 718.80 L1008.57 718.12 L1007.95 717.45 L1007.31 716.82 L1006.66 716.21 L1006.00 715.63 L1005.32 715.07 L1004.63 714.52 L1003.92 714.00 L1003.22 713.51 L1002.50 713.02 L1001.77 712.55 L1001.04 712.10 L1000.31 711.67 L999.56 711.24 L998.81 710.84 L998.06 710.45 L997.29 710.06 L996.54 709.70 L995.77 709.34 L994.99 709.00 L994.22 708.67 L993.44 708.35 L992.66 708.05 L991.87 707.74 L991.08 707.46 L990.30 707.18 L989.50 706.91 L988.71 706.66 L987.91 706.40 L987.11 706.17 L986.31 705.93 L985.50 705.71 L984.70 705.50 L983.89 705.29 L983.09 705.10 L982.27 704.91 L981.47 704.73 L980.65 704.56 L979.84 704.40 L979.02 704.24 L978.20 704.09 L977.39 703.95 L976.57 703.82 L975.75 703.69 L974.93 703.57 L974.11 703.46 L973.28 703.36 L972.46 703.26 L971.64 703.17 L970.81 703.09 L969.99 703.02 L969.16 702.95 L968.34 702.89 L967.51 702.84 L966.68 702.79 L965.86 702.76 L965.03 702.72 L964.20 702.70 L963.37 702.69 L962.54 702.68 L961.71 702.68 L960.88 702.68 L960.05 702.70 L959.22 702.72 L958.39 702.75 L957.56 702.78 L956.73 702.83 L955.90 702.88 L955.07 702.94 L954.24 703.01 L953.42 703.08 L952.59 703.17 L951.76 703.26 L950.96 703.35Z"/><circle cx="951.37" cy="706.63" r="3.30"/><circle cx="962.98" cy="749.04" r="2.50"/><path d="M951.60 746.92 L950.85 746.63 L950.10 746.33 L949.35 746.02 L948.61 745.70 L947.88 745.38 L947.14 745.05 L946.42 744.71 L945.70 744.37 L944.98 744.02 L944.28 743.65 L943.57 743.29 L942.88 742.91 L942.19 742.53 L941.51 742.14 L940.84 741.74 L940.16 741.33 L939.51 740.91 L938.86 740.49 L938.22 740.05 L937.59 739.62 L936.97 739.16 L936.34 738.75 L935.69 738.40 L935.04 738.03 L934.39 737.65 L933.77 737.27 L933.15 736.87 L932.54 736.46 L931.94 736.04 L931.37 735.61 L930.81 735.17 L930.25 734.70 L929.72 734.23 L929.21 733.76 L928.72 733.28 L928.25 732.77 L927.81 732.25 L927.39 731.73 L927.00 731.19 L926.64 730.65 L926.31 730.11 L926.02 729.55 L925.77 728.99 L925.56 728.43 L925.38 727.87 L925.25 727.31 L925.16 726.75 L925.11 726.19 L925.11 725.63 L925.14 725.07 L925.22 724.52 L925.34 723.97 L925.50 723.42 L925.71 722.88 L925.95 722.34 L926.24 721.81 L926.56 721.28 L926.92 720.76 L927.31 720.26 L927.73 719.76 L928.18 719.28 L928.67 718.80 L929.17 718.34 L929.70 717.89 L930.25 717.46 L930.81 717.04 L931.39 716.64 L931.99 716.25 L932.61 715.86 L933.24 715.50 L933.87 715.15 L934.52 714.81 L935.19 714.48 L935.85 714.17 L936.53 713.87 L937.22 713.57 L937.91 713.29 L938.60 713.03 L939.32 712.77 L940.03 712.52 L940.74 712.28 L941.47 712.05 L942.19 711.84 L942.93 711.63 L943.66 711.43 L944.40 711.25 L945.15 711.06 L945.89 710.89 L946.64 710.73 L947.39 710.58 L948.14 710.44 L948.90 710.30 L949.66 710.17 L950.42 710.05 L951.18 709.94 L951.95 709.83 L952.71 709.73 L953.48 709.65 L954.25 709.57 L955.01 709.49 L955.79 709.43 L956.56 709.37 L957.33 709.32 L958.10 709.27 L958.88 709.24 L959.65 709.21 L960.43 709.18 L961.23 709.17 L961.07 702.67 L960.26 702.69 L959.43 702.71 L958.59 702.74 L957.76 702.78 L956.93 702.83 L956.10 702.89 L955.26 702.95 L954.43 703.02 L953.60 703.10 L952.77 703.19 L951.93 703.28 L951.10 703.39 L950.27 703.50 L949.44 703.62 L948.61 703.75 L947.78 703.89 L946.96 704.04 L946.13 704.20 L945.30 704.37 L944.48 704.55 L943.65 704.74 L942.84 704.93 L942.01 705.14 L941.19 705.37 L940.38 705.60 L939.56 705.84 L938.76 706.10 L937.94 706.36 L937.13 706.65 L936.34 706.94 L935.53 707.24 L934.72 707.57 L933.94 707.90 L933.14 708.26 L932.35 708.63 L931.58 709.02 L930.80 709.42 L930.02 709.85 L929.26 710.30 L928.51 710.76 L927.77 711.24 L927.02 711.76 L926.29 712.30 L925.58 712.87 L924.88 713.46 L924.20 714.08 L923.53 714.74 L922.89 715.43 L922.26 716.16 L921.67 716.92 L921.11 717.73 L920.60 718.58 L920.12 719.46 L919.70 720.39 L919.34 721.35 L919.04 722.35 L918.82 723.37 L918.68 724.41 L918.61 725.45 L918.62 726.50 L918.71 727.55 L918.87 728.57 L919.11 729.57 L919.41 730.55 L919.77 731.49 L920.18 732.40 L920.64 733.27 L921.13 734.11 L921.66 734.91 L922.22 735.67 L922.81 736.41 L923.41 737.11 L924.04 737.78 L924.69 738.43 L925.36 739.06 L926.03 739.65 L926.71 740.22 L927.41 740.77 L928.13 741.30 L928.85 741.81 L929.57 742.30 L930.30 742.77 L931.05 743.23 L931.80 743.67 L932.55 744.09 L933.31 744.50 L934.11 744.83 L934.93 745.09 L935.76 745.35 L936.57 745.58 L937.40 745.81 L938.23 746.02 L939.05 746.21 L939.88 746.40 L940.70 746.57 L941.52 746.73 L942.35 746.89 L943.17 747.02 L944.00 747.16 L944.82 747.27 L945.65 747.39 L946.47 747.49 L947.29 747.58 L948.11 747.66 L948.93 747.73 L949.75 747.80 L950.57 747.85 L951.39 747.90Z"/><circle cx="961.15" cy="705.92" r="3.25"/></g><g fill="#2b2d30" fill-opacity="0.75"><circle cx="290.5" cy="128.2" r="0.41"/><circle cx="290.8" cy="125.1" r="0.55"/><circle cx="293.7" cy="129.6" r="0.44"/><circle cx="295.1" cy="127.1" r="0.56"/><circle cx="297.4" cy="127.0" r="0.48"/><circle cx="298.6" cy="127.3" r="0.44"/><circle cx="304.9" cy="121.9" r="0.37"/><circle cx="307.1" cy="123.3" r="0.42"/><circle cx="315.0" cy="123.8" r="0.59"/><circle cx="316.8" cy="123.3" r="0.47"/><circle cx="317.5" cy="123.3" r="0.60"/><circle cx="320.0" cy="120.0" r="0.53"/><circle cx="320.9" cy="121.6" r="0.31"/><circle cx="321.7" cy="122.9" r="0.59"/><circle cx="322.4" cy="118.5" r="0.48"/><circle cx="323.5" cy="120.1" r="0.48"/><circle cx="325.2" cy="122.5" r="0.39"/><circle cx="335.0" cy="118.6" r="0.59"/><circle cx="336.2" cy="119.1" r="0.47"/><circle cx="339.2" cy="120.0" r="0.44"/><circle cx="342.5" cy="117.0" r="0.50"/><circle cx="342.9" cy="119.0" r="0.48"/><circle cx="344.5" cy="118.5" r="0.48"/><circle cx="346.9" cy="119.4" r="0.52"/><circle cx="347.6" cy="120.6" r="0.37"/><circle cx="350.5" cy="118.1" r="0.40"/><circle cx="352.9" cy="118.2" r="0.50"/><circle cx="354.0" cy="117.1" r="0.46"/><circle cx="356.8" cy="117.9" r="0.54"/><circle cx="358.5" cy="117.2" r="0.39"/><circle cx="359.0" cy="118.3" r="0.43"/><circle cx="361.8" cy="116.6" r="0.58"/><circle cx="365.5" cy="120.5" r="0.55"/><circle cx="366.7" cy="118.5" r="0.37"/><circle cx="368.9" cy="120.9" r="0.31"/><circle cx="373.2" cy="120.9" r="0.35"/><circle cx="378.3" cy="118.8" r="0.56"/><circle cx="380.4" cy="120.4" r="0.55"/><circle cx="384.2" cy="121.3" r="0.56"/><circle cx="385.5" cy="119.6" r="0.46"/><circle cx="387.8" cy="118.9" r="0.34"/><circle cx="388.0" cy="123.4" r="0.56"/><circle cx="390.4" cy="120.5" r="0.41"/><circle cx="392.7" cy="120.9" r="0.34"/><circle cx="395.3" cy="120.5" r="0.41"/><circle cx="404.0" cy="123.8" r="0.51"/><circle cx="411.0" cy="124.8" r="0.34"/><circle cx="415.7" cy="126.7" r="0.30"/><circle cx="418.5" cy="125.0" r="0.33"/><circle cx="418.7" cy="125.0" r="0.55"/><circle cx="423.6" cy="129.7" r="0.45"/><circle cx="619.5" cy="390.9" r="0.58"/><circle cx="617.8" cy="390.8" r="0.37"/><circle cx="616.4" cy="392.0" r="0.38"/><circle cx="614.7" cy="389.1" r="0.34"/><circle cx="613.4" cy="392.9" r="0.56"/><circle cx="612.9" cy="388.1" r="0.56"/><circle cx="610.3" cy="388.1" r="0.51"/><circle cx="607.8" cy="390.8" r="0.35"/><circle cx="606.9" cy="391.0" r="0.48"/><circle cx="605.7" cy="390.8" r="0.55"/><circle cx="604.6" cy="389.9" r="0.51"/><circle cx="603.1" cy="388.5" r="0.55"/><circle cx="600.3" cy="391.6" r="0.35"/><circle cx="599.9" cy="388.0" r="0.58"/><circle cx="598.7" cy="389.9" r="0.46"/><circle cx="598.2" cy="387.9" r="0.54"/><circle cx="597.1" cy="386.8" r="0.33"/><circle cx="594.7" cy="386.7" r="0.46"/><circle cx="593.3" cy="390.2" r="0.32"/><circle cx="591.2" cy="390.5" r="0.60"/><circle cx="589.9" cy="387.6" r="0.55"/><circle cx="588.6" cy="385.8" r="0.31"/><circle cx="587.0" cy="386.4" r="0.58"/><circle cx="585.3" cy="387.6" r="0.34"/><circle cx="584.6" cy="387.4" r="0.60"/><circle cx="579.4" cy="386.7" r="0.34"/><circle cx="575.5" cy="387.3" r="0.38"/><circle cx="568.1" cy="383.4" r="0.53"/><circle cx="567.9" cy="381.0" r="0.49"/><circle cx="566.6" cy="382.7" r="0.38"/><circle cx="563.1" cy="380.9" r="0.52"/><circle cx="556.7" cy="377.3" r="0.58"/><circle cx="554.0" cy="376.1" r="0.47"/><circle cx="548.3" cy="375.8" r="0.43"/><circle cx="548.9" cy="373.3" r="0.49"/><circle cx="545.8" cy="374.3" r="0.34"/><circle cx="545.8" cy="373.1" r="0.31"/><circle cx="547.2" cy="368.8" r="0.30"/><circle cx="545.1" cy="368.8" r="0.33"/><circle cx="545.6" cy="367.1" r="0.33"/><circle cx="545.7" cy="366.3" r="0.59"/><circle cx="547.2" cy="362.8" r="0.47"/><circle cx="547.9" cy="358.1" r="0.47"/><circle cx="550.0" cy="359.5" r="0.57"/><circle cx="550.2" cy="357.2" r="0.59"/><circle cx="554.7" cy="358.2" r="0.45"/><circle cx="555.3" cy="357.9" r="0.45"/><circle cx="555.8" cy="355.6" r="0.43"/><circle cx="558.2" cy="354.1" r="0.38"/><circle cx="559.2" cy="352.3" r="0.35"/><circle cx="560.3" cy="353.4" r="0.44"/><circle cx="562.7" cy="353.2" r="0.39"/><circle cx="724.9" cy="352.1" r="0.50"/><circle cx="726.3" cy="354.9" r="0.31"/><circle cx="728.5" cy="353.7" r="0.43"/><circle cx="728.8" cy="354.8" r="0.49"/><circle cx="728.4" cy="359.2" r="0.39"/><circle cx="731.0" cy="358.0" r="0.54"/><circle cx="734.6" cy="361.5" r="0.36"/><circle cx="732.1" cy="363.7" r="0.44"/><circle cx="732.3" cy="365.9" r="0.46"/><circle cx="729.6" cy="366.5" r="0.34"/><circle cx="731.1" cy="368.9" r="0.31"/><circle cx="728.2" cy="370.6" r="0.48"/><circle cx="724.9" cy="373.4" r="0.49"/><circle cx="723.5" cy="375.5" r="0.50"/><circle cx="723.4" cy="377.5" r="0.32"/><circle cx="722.4" cy="377.3" r="0.42"/><circle cx="721.2" cy="376.8" r="0.46"/><circle cx="719.1" cy="378.0" r="0.41"/><circle cx="717.6" cy="379.7" r="0.37"/><circle cx="715.8" cy="381.4" r="0.43"/><circle cx="709.4" cy="379.2" r="0.53"/><circle cx="706.1" cy="381.4" r="0.32"/><circle cx="706.0" cy="383.8" r="0.40"/><circle cx="705.5" cy="384.1" r="0.33"/><circle cx="703.6" cy="380.9" r="0.48"/><circle cx="703.5" cy="383.6" r="0.41"/><circle cx="700.0" cy="385.8" r="0.40"/><circle cx="698.7" cy="386.6" r="0.59"/><circle cx="697.3" cy="384.3" r="0.31"/><circle cx="694.6" cy="385.8" r="0.35"/><circle cx="692.5" cy="387.0" r="0.54"/><circle cx="485.8" cy="367.2" r="0.30"/><circle cx="487.0" cy="365.7" r="0.48"/><circle cx="491.3" cy="364.2" r="0.33"/><circle cx="496.3" cy="364.4" r="0.50"/><circle cx="497.6" cy="364.3" r="0.36"/><circle cx="499.1" cy="367.0" r="0.56"/><circle cx="501.5" cy="364.9" r="0.57"/><circle cx="503.2" cy="365.6" r="0.57"/><circle cx="503.8" cy="363.4" r="0.46"/><circle cx="504.9" cy="365.2" r="0.58"/><circle cx="507.5" cy="365.5" r="0.35"/><circle cx="508.8" cy="365.4" r="0.48"/><circle cx="509.6" cy="367.2" r="0.60"/><circle cx="512.1" cy="365.6" r="0.31"/><circle cx="515.5" cy="364.4" r="0.56"/><circle cx="519.4" cy="366.3" r="0.40"/><circle cx="520.0" cy="364.8" r="0.40"/><circle cx="522.1" cy="366.2" r="0.31"/><circle cx="524.9" cy="365.9" r="0.43"/><circle cx="530.4" cy="366.3" r="0.38"/><circle cx="532.4" cy="366.7" r="0.60"/><circle cx="533.0" cy="363.1" r="0.36"/><circle cx="536.0" cy="365.1" r="0.34"/><circle cx="539.0" cy="364.6" r="0.51"/><circle cx="931.6" cy="739.5" r="0.49"/><circle cx="930.4" cy="739.9" r="0.33"/><circle cx="930.9" cy="736.3" r="0.59"/><circle cx="926.3" cy="739.0" r="0.46"/><circle cx="926.7" cy="737.6" r="0.31"/><circle cx="925.9" cy="730.5" r="0.60"/><circle cx="921.2" cy="730.8" r="0.39"/><circle cx="920.5" cy="724.6" r="0.57"/><circle cx="922.8" cy="722.6" r="0.53"/><circle cx="922.2" cy="721.3" r="0.59"/><circle cx="921.6" cy="720.4" r="0.33"/><circle cx="923.8" cy="719.7" r="0.43"/><circle cx="925.3" cy="718.6" r="0.33"/><circle cx="924.7" cy="716.8" r="0.59"/><circle cx="927.1" cy="718.3" r="0.36"/><circle cx="929.0" cy="717.2" r="0.36"/><circle cx="928.0" cy="713.6" r="0.32"/><circle cx="930.5" cy="713.9" r="0.41"/><circle cx="933.3" cy="710.0" r="0.57"/><circle cx="934.2" cy="709.8" r="0.52"/><circle cx="936.2" cy="712.9" r="0.56"/><circle cx="935.7" cy="708.2" r="0.59"/><circle cx="938.6" cy="711.2" r="0.48"/><circle cx="939.1" cy="710.5" r="0.32"/><circle cx="942.2" cy="710.5" r="0.36"/><circle cx="942.5" cy="708.0" r="0.32"/><circle cx="945.4" cy="707.1" r="0.57"/><circle cx="948.3" cy="704.9" r="0.31"/><circle cx="951.0" cy="707.4" r="0.44"/><circle cx="951.9" cy="709.0" r="0.32"/><circle cx="969.9" cy="707.1" r="0.51"/><circle cx="970.4" cy="705.0" r="0.34"/><circle cx="971.9" cy="706.6" r="0.36"/><circle cx="975.8" cy="705.8" r="0.34"/><circle cx="980.7" cy="709.4" r="0.45"/><circle cx="985.4" cy="707.0" r="0.55"/><circle cx="988.0" cy="710.6" r="0.43"/><circle cx="989.3" cy="710.2" r="0.38"/><circle cx="991.4" cy="710.8" r="0.37"/><circle cx="992.7" cy="710.6" r="0.32"/><circle cx="997.0" cy="711.3" r="0.54"/><circle cx="997.9" cy="713.2" r="0.56"/><circle cx="998.2" cy="715.6" r="0.41"/><circle cx="998.6" cy="716.5" r="0.48"/><circle cx="1000.0" cy="715.5" r="0.47"/><circle cx="1002.9" cy="715.7" r="0.35"/><circle cx="1003.7" cy="715.9" r="0.32"/><circle cx="903.5" cy="649.0" r="0.35"/><circle cx="903.5" cy="650.0" r="0.50"/><circle cx="905.8" cy="649.7" r="0.51"/><circle cx="907.2" cy="650.0" r="0.56"/><circle cx="905.6" cy="653.1" r="0.45"/><circle cx="908.6" cy="653.9" r="0.41"/><circle cx="914.4" cy="657.6" r="0.35"/><circle cx="914.2" cy="660.4" r="0.57"/><circle cx="916.8" cy="659.8" r="0.44"/><circle cx="915.5" cy="664.6" r="0.41"/><circle cx="917.0" cy="664.9" r="0.40"/><circle cx="918.7" cy="664.5" r="0.32"/><circle cx="920.0" cy="666.5" r="0.41"/><circle cx="923.1" cy="667.2" r="0.57"/><circle cx="922.1" cy="669.0" r="0.44"/><circle cx="923.7" cy="668.5" r="0.55"/><circle cx="926.0" cy="671.6" r="0.30"/><circle cx="926.0" cy="674.9" r="0.51"/><circle cx="926.1" cy="676.0" r="0.54"/><circle cx="927.2" cy="676.9" r="0.40"/><circle cx="929.5" cy="677.1" r="0.60"/><circle cx="931.1" cy="679.1" r="0.48"/><circle cx="932.6" cy="679.1" r="0.35"/><circle cx="930.6" cy="682.3" r="0.47"/><circle cx="934.3" cy="681.7" r="0.40"/><circle cx="352.3" cy="236.6" r="0.51"/><circle cx="355.5" cy="237.4" r="0.42"/><circle cx="353.6" cy="238.2" r="0.40"/><circle cx="352.0" cy="241.6" r="0.56"/><circle cx="353.8" cy="244.7" r="0.56"/><circle cx="355.7" cy="245.3" r="0.58"/><circle cx="353.2" cy="247.2" r="0.54"/><circle cx="355.0" cy="247.8" r="0.32"/><circle cx="354.4" cy="252.7" r="0.59"/><circle cx="353.6" cy="254.3" r="0.36"/><circle cx="354.0" cy="256.7" r="0.57"/><circle cx="352.9" cy="257.5" r="0.47"/><circle cx="353.7" cy="258.3" r="0.40"/><circle cx="354.1" cy="259.1" r="0.52"/><circle cx="352.4" cy="259.9" r="0.57"/></g></svg>
</body></html>
